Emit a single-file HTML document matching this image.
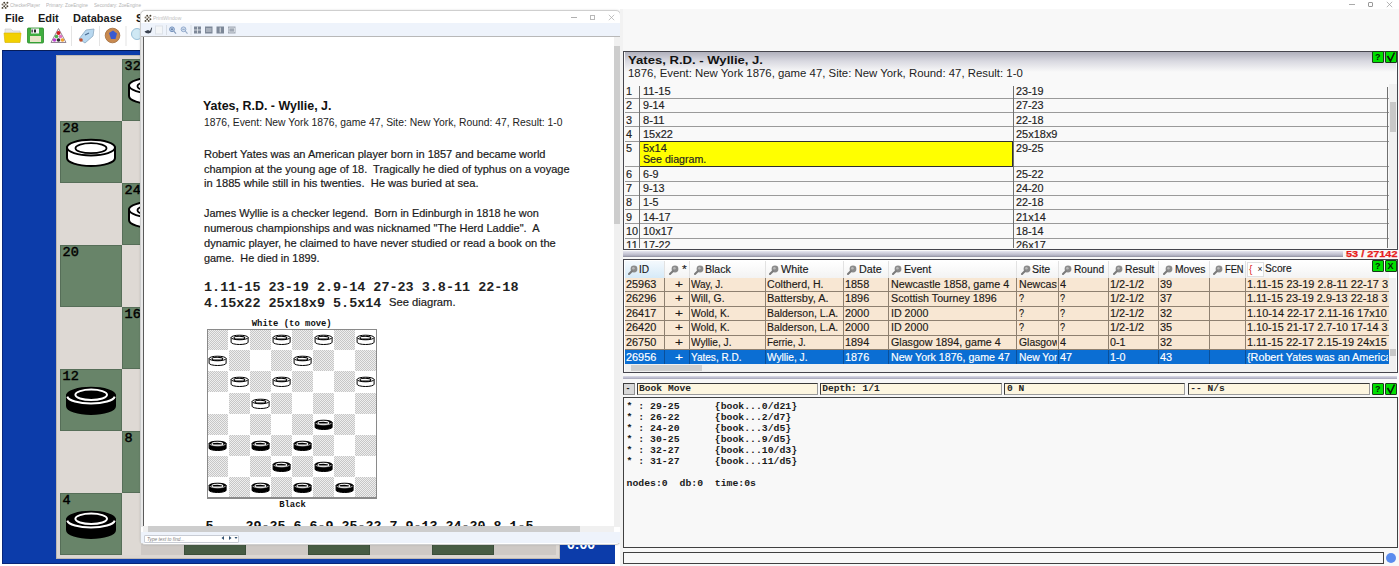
<!DOCTYPE html><html><head><meta charset="utf-8"><style>
*{box-sizing:border-box}
html,body{margin:0;padding:0}
body{width:1399px;height:566px;overflow:hidden;position:relative;background:#f8f8f8;font-family:"Liberation Sans",sans-serif;color:#000}
.a{position:absolute}
svg{display:block}
.nw{white-space:pre}
.mono{font-family:"Liberation Mono",monospace}
.menu{position:absolute;font-weight:bold;font-size:11px;top:11.5px;color:#1a1a1a;line-height:13px}
.sq{position:absolute;width:62px;height:62px}
.lt{background:#ded9d4}
.dk{background:#688469;box-shadow:inset 0 0 0 1px #566e58}
.lbl{position:absolute;left:2.6px;top:1.4px;font-family:"Liberation Mono",monospace;font-weight:normal;font-size:13.5px;line-height:14px;color:#000;-webkit-text-stroke:0.45px #000}
</style></head><body>
<div class="a" style="left:0;top:0;width:620px;height:566px;background:#fff"></div>
<div class="a nw" style="left:10.00px;top:2.12px;font-size:6px;line-height:6px;font-family:'Liberation Sans',sans-serif;color:#b4b4b4;transform-origin:0 0;transform:scaleX(0.7624);">CheckerPlayer</div>
<div class="a nw" style="left:46.00px;top:2.12px;font-size:6px;line-height:6px;font-family:'Liberation Sans',sans-serif;color:#b4b4b4;transform-origin:0 0;transform:scaleX(0.7921);">Primary: ZoeEngine</div>
<div class="a nw" style="left:94.00px;top:2.12px;font-size:6px;line-height:6px;font-family:'Liberation Sans',sans-serif;color:#b4b4b4;transform-origin:0 0;transform:scaleX(0.7700);">Secondary: ZoeEngine</div>
<svg class="a" style="left:0.8px;top:0.6px" width="8" height="8" viewBox="0 0 8 8"><circle cx="3.1999999999999997" cy="1.8" r="0.95" fill="#4a4232"/><circle cx="6.4" cy="1.8" r="0.95" fill="#4a4232"/><circle cx="1.5" cy="3.5" r="0.95" fill="#7a7060"/><circle cx="4.7" cy="3.5" r="0.95" fill="#7a7060"/><circle cx="3.1999999999999997" cy="5.2" r="0.95" fill="#4a4232"/><circle cx="6.4" cy="5.2" r="0.95" fill="#4a4232"/><circle cx="1.5" cy="6.9" r="0.95" fill="#4a4232"/><circle cx="4.7" cy="6.9" r="0.95" fill="#4a4232"/></svg>
<svg class="a" style="left:0;top:24px" width="141" height="24" viewBox="0 0 141 24"><path d="M5,5 L11,5 L13,7 L20,7 L20,18 L5,18 Z" fill="#e8e8e8" stroke="#c8c8c8" stroke-width="0.6"/><path d="M4,9 L21,9 L20,18.5 L5,18.5 Z" fill="#f2d000" stroke="#d8b400" stroke-width="0.6"/><rect x="27.5" y="4" width="16" height="15" rx="1" fill="#3fae3f" stroke="#2a8a2a" stroke-width="0.8"/><rect x="31" y="4.5" width="8" height="5" fill="#f4f4f4"/><rect x="34" y="5.5" width="2" height="3" fill="#222"/><rect x="31.5" y="5.5" width="1.2" height="3" fill="#222"/><rect x="30" y="12" width="11" height="6" fill="#e8e6c8"/><path d="M58.5,4.5 L66,18.5 L51,18.5 Z" fill="#f6f6f6" stroke="#8a7a8a" stroke-width="0.9"/><circle cx="58.5" cy="9" r="2" fill="#d02020"/><circle cx="56.5" cy="12.5" r="1.8" fill="#50b050"/><circle cx="60.5" cy="12.5" r="1.8" fill="#e070c0"/><circle cx="54.5" cy="16" r="1.8" fill="#c040d0"/><circle cx="58.5" cy="16" r="1.8" fill="#303030"/><circle cx="62.5" cy="16" r="1.8" fill="#f0a030"/><rect x="71" y="2" width="1" height="20" fill="#e4e4e4"/><path d="M79,15 L86,6 L94,5 L93,12 L85,19 Z" fill="#b8d8f0" stroke="#8aa8c0" stroke-width="0.8"/><circle cx="81" cy="16" r="1.8" fill="#c05030"/><path d="M85,11 L89,9" stroke="#4a6a90" stroke-width="1.2"/><rect x="99" y="2" width="1" height="20" fill="#e4e4e4"/><circle cx="112.5" cy="11.5" r="7.3" fill="#c88a50" stroke="#a06a38" stroke-width="0.8"/><path d="M109,9 L113,6.5 L117,9.5 L115.5,15 L111,15 Z" fill="#3a5ad0"/><rect x="125.5" y="2" width="1" height="20" fill="#e4e4e4"/><circle cx="137" cy="10" r="5.5" fill="#cfe8f4" stroke="#9ac0d8" stroke-width="1"/></svg>
<div class="menu" style="left:5px">File</div>
<div class="menu" style="left:38px">Edit</div>
<div class="menu" style="left:73px">Database</div>
<div class="menu" style="left:136px">S</div>
<div class="a" style="left:2px;top:50px;width:613px;height:514px;background:#0c3caa;border-top:1.6px solid #061c58;border-left:1px solid #08267a;border-bottom:1px solid #08267a"></div>
<div class="a" style="left:56px;top:55px;width:504px;height:504px;background:#dcd7d2;box-shadow:inset 0 0 0 1px #bdb8b3"></div>
<div class="sq lt" style="left:60px;top:59px"></div>
<div class="sq dk" style="left:122px;top:59px"><div class="lbl">32</div><svg class="a" style="left:0;top:0" width="62" height="62" viewBox="0 0 62 62"><path d="M7,26.6 L7,37 A24,8 0 0 0 55,37 L55,26.6 Z" fill="#fff" stroke="#000" stroke-width="2"/><ellipse cx="31" cy="26.6" rx="24" ry="7.8" fill="#fff" stroke="#000" stroke-width="2"/><ellipse cx="31" cy="27.2" rx="15.5" ry="5" fill="none" stroke="#000" stroke-width="1.8"/></svg></div>
<div class="sq lt" style="left:184px;top:59px"></div>
<div class="sq dk" style="left:246px;top:59px"><div class="lbl">31</div></div>
<div class="sq lt" style="left:308px;top:59px"></div>
<div class="sq dk" style="left:370px;top:59px"><div class="lbl">30</div></div>
<div class="sq lt" style="left:432px;top:59px"></div>
<div class="sq dk" style="left:494px;top:59px"><div class="lbl">29</div></div>
<div class="sq dk" style="left:60px;top:121px"><div class="lbl">28</div><svg class="a" style="left:0;top:0" width="62" height="62" viewBox="0 0 62 62"><path d="M7,26.6 L7,37 A24,8 0 0 0 55,37 L55,26.6 Z" fill="#fff" stroke="#000" stroke-width="2"/><ellipse cx="31" cy="26.6" rx="24" ry="7.8" fill="#fff" stroke="#000" stroke-width="2"/><ellipse cx="31" cy="27.2" rx="15.5" ry="5" fill="none" stroke="#000" stroke-width="1.8"/></svg></div>
<div class="sq lt" style="left:122px;top:121px"></div>
<div class="sq dk" style="left:184px;top:121px"><div class="lbl">27</div></div>
<div class="sq lt" style="left:246px;top:121px"></div>
<div class="sq dk" style="left:308px;top:121px"><div class="lbl">26</div></div>
<div class="sq lt" style="left:370px;top:121px"></div>
<div class="sq dk" style="left:432px;top:121px"><div class="lbl">25</div></div>
<div class="sq lt" style="left:494px;top:121px"></div>
<div class="sq lt" style="left:60px;top:183px"></div>
<div class="sq dk" style="left:122px;top:183px"><div class="lbl">24</div><svg class="a" style="left:0;top:0" width="62" height="62" viewBox="0 0 62 62"><path d="M7,26.6 L7,37 A24,8 0 0 0 55,37 L55,26.6 Z" fill="#fff" stroke="#000" stroke-width="2"/><ellipse cx="31" cy="26.6" rx="24" ry="7.8" fill="#fff" stroke="#000" stroke-width="2"/><ellipse cx="31" cy="27.2" rx="15.5" ry="5" fill="none" stroke="#000" stroke-width="1.8"/></svg></div>
<div class="sq lt" style="left:184px;top:183px"></div>
<div class="sq dk" style="left:246px;top:183px"><div class="lbl">23</div></div>
<div class="sq lt" style="left:308px;top:183px"></div>
<div class="sq dk" style="left:370px;top:183px"><div class="lbl">22</div></div>
<div class="sq lt" style="left:432px;top:183px"></div>
<div class="sq dk" style="left:494px;top:183px"><div class="lbl">21</div></div>
<div class="sq dk" style="left:60px;top:245px"><div class="lbl">20</div></div>
<div class="sq lt" style="left:122px;top:245px"></div>
<div class="sq dk" style="left:184px;top:245px"><div class="lbl">19</div></div>
<div class="sq lt" style="left:246px;top:245px"></div>
<div class="sq dk" style="left:308px;top:245px"><div class="lbl">18</div></div>
<div class="sq lt" style="left:370px;top:245px"></div>
<div class="sq dk" style="left:432px;top:245px"><div class="lbl">17</div></div>
<div class="sq lt" style="left:494px;top:245px"></div>
<div class="sq lt" style="left:60px;top:307px"></div>
<div class="sq dk" style="left:122px;top:307px"><div class="lbl">16</div></div>
<div class="sq lt" style="left:184px;top:307px"></div>
<div class="sq dk" style="left:246px;top:307px"><div class="lbl">15</div></div>
<div class="sq lt" style="left:308px;top:307px"></div>
<div class="sq dk" style="left:370px;top:307px"><div class="lbl">14</div></div>
<div class="sq lt" style="left:432px;top:307px"></div>
<div class="sq dk" style="left:494px;top:307px"><div class="lbl">13</div></div>
<div class="sq dk" style="left:60px;top:369px"><div class="lbl">12</div><svg class="a" style="left:0;top:0" width="62" height="62" viewBox="0 0 62 62"><path d="M7,26.6 L7,37 A24,8 0 0 0 55,37 L55,26.6 Z" fill="#000" stroke="#000" stroke-width="2"/><ellipse cx="31" cy="26.6" rx="24" ry="7.8" fill="#000" stroke="#000" stroke-width="2"/><path d="M7.3,27.6 A23.8,7.6 0 0 0 54.7,27.6" fill="none" stroke="#fff" stroke-width="2"/><ellipse cx="31.2" cy="25.8" rx="15.8" ry="5.2" fill="none" stroke="#fff" stroke-width="2"/></svg></div>
<div class="sq lt" style="left:122px;top:369px"></div>
<div class="sq dk" style="left:184px;top:369px"><div class="lbl">11</div></div>
<div class="sq lt" style="left:246px;top:369px"></div>
<div class="sq dk" style="left:308px;top:369px"><div class="lbl">10</div></div>
<div class="sq lt" style="left:370px;top:369px"></div>
<div class="sq dk" style="left:432px;top:369px"><div class="lbl">9</div></div>
<div class="sq lt" style="left:494px;top:369px"></div>
<div class="sq lt" style="left:60px;top:431px"></div>
<div class="sq dk" style="left:122px;top:431px"><div class="lbl">8</div></div>
<div class="sq lt" style="left:184px;top:431px"></div>
<div class="sq dk" style="left:246px;top:431px"><div class="lbl">7</div></div>
<div class="sq lt" style="left:308px;top:431px"></div>
<div class="sq dk" style="left:370px;top:431px"><div class="lbl">6</div></div>
<div class="sq lt" style="left:432px;top:431px"></div>
<div class="sq dk" style="left:494px;top:431px"><div class="lbl">5</div></div>
<div class="sq dk" style="left:60px;top:493px"><div class="lbl">4</div><svg class="a" style="left:0;top:0" width="62" height="62" viewBox="0 0 62 62"><path d="M7,26.6 L7,37 A24,8 0 0 0 55,37 L55,26.6 Z" fill="#000" stroke="#000" stroke-width="2"/><ellipse cx="31" cy="26.6" rx="24" ry="7.8" fill="#000" stroke="#000" stroke-width="2"/><path d="M7.3,27.6 A23.8,7.6 0 0 0 54.7,27.6" fill="none" stroke="#fff" stroke-width="2"/><ellipse cx="31.2" cy="25.8" rx="15.8" ry="5.2" fill="none" stroke="#fff" stroke-width="2"/></svg></div>
<div class="sq lt" style="left:122px;top:493px"></div>
<div class="sq dk" style="left:184px;top:493px"><div class="lbl">3</div></div>
<div class="sq lt" style="left:246px;top:493px"></div>
<div class="sq dk" style="left:308px;top:493px"><div class="lbl">2</div></div>
<div class="sq lt" style="left:370px;top:493px"></div>
<div class="sq dk" style="left:432px;top:493px"><div class="lbl">1</div></div>
<div class="sq lt" style="left:494px;top:493px"></div>
<div class="a nw" style="left:567px;top:536px;font-size:14px;font-weight:bold;color:#fff">0:00</div>
<div class="a" style="left:141px;top:544px;width:415px;height:11px;background:rgba(0,0,0,0.07)"></div>
<div class="a" style="left:184px;top:544px;width:62px;height:11px;background:rgba(20,30,10,0.32)"></div>
<div class="a" style="left:308px;top:544px;width:62px;height:11px;background:rgba(20,30,10,0.32)"></div>
<div class="a" style="left:432px;top:544px;width:62px;height:11px;background:rgba(20,30,10,0.32)"></div>
<div class="a" style="left:140px;top:10px;width:481px;height:534.5px;background:#fff;border:1px solid #cfcfcf;border-radius:5px;box-shadow:0 0 2px rgba(0,0,0,.15)"></div>
<svg class="a" style="left:143.5px;top:14px" width="8" height="8" viewBox="0 0 8 8"><circle cx="3.1999999999999997" cy="1.8" r="0.95" fill="#4a4232"/><circle cx="6.4" cy="1.8" r="0.95" fill="#4a4232"/><circle cx="1.5" cy="3.5" r="0.95" fill="#7a7060"/><circle cx="4.7" cy="3.5" r="0.95" fill="#7a7060"/><circle cx="3.1999999999999997" cy="5.2" r="0.95" fill="#4a4232"/><circle cx="6.4" cy="5.2" r="0.95" fill="#4a4232"/><circle cx="1.5" cy="6.9" r="0.95" fill="#4a4232"/><circle cx="4.7" cy="6.9" r="0.95" fill="#4a4232"/></svg>
<div class="a nw" id="pwt" style="left:153px;top:14.5px;font-size:7px;line-height:8px;color:#c0c0c0;transform-origin:0 0;transform:scale(0.72,0.8)">PrintWindow</div>
<div class="a" style="left:571px;top:17px;width:6px;height:1px;background:#b0b0b0"></div>
<div class="a" style="left:589.5px;top:14.5px;width:5px;height:5px;border:1px solid #b8b8b8"></div>
<svg class="a" style="left:608px;top:14px" width="7" height="7" viewBox="0 0 7 7"><path d="M0.8,0.8 L6.2,6.2 M6.2,0.8 L0.8,6.2" stroke="#a8a8a8" stroke-width="0.7"/></svg>
<div class="a" style="left:141px;top:23px;width:479px;height:14px;background:#eef3fb;border-bottom:1px solid #b8b8b8"></div>
<svg class="a" style="left:141px;top:23px" width="110" height="14" viewBox="0 0 110 14"><path d="M3.5,8.5 L7,7 L9,8 L10.5,4.5 L11.2,4.8 L10,9.5 L7.5,10.5 L5,10 Z" fill="#3a4250"/><rect x="14.5" y="3" width="7" height="8" fill="#f4f6f8" stroke="#dde2e8" stroke-width="1"/><rect x="25" y="2" width="1" height="10" fill="#d8dde4"/><circle cx="31" cy="6.3" r="2.4" fill="#c4d4ea" stroke="#6a8ab8" stroke-width="0.9"/><path d="M29.8,6.3 H32.2 M31,5.1 V7.5" stroke="#4a6a98" stroke-width="0.7"/><path d="M32.8,8.2 L35,10.6" stroke="#8098b8" stroke-width="1.2"/><circle cx="42.5" cy="6.3" r="2.4" fill="#d4e0f0" stroke="#8aa4c8" stroke-width="0.9"/><path d="M41.3,6.3 H43.7" stroke="#6a88b0" stroke-width="0.7"/><path d="M44.3,8.2 L46.5,10.6" stroke="#98acc8" stroke-width="1.2"/><rect x="49.5" y="2" width="1" height="10" fill="#d8dde4"/><rect x="53" y="3.5" width="7" height="7" fill="#7d8898"/><path d="M56.5,3.5 V10.5 M53,7 H60" stroke="#e8ecf0" stroke-width="0.8"/><rect x="64" y="3.5" width="7.5" height="7" fill="#7d8898"/><path d="M65,6 H70.5 M65,8 H70.5" stroke="#e8ecf0" stroke-width="0.8"/><rect x="75.5" y="3.5" width="7.5" height="7" fill="#7d8898"/><path d="M79.2,4.5 V9.5" stroke="#e8ecf0" stroke-width="1"/><rect x="87" y="3.5" width="7.5" height="7" fill="#a0a8b4"/><path d="M88,5 H93.5 V9 H88 Z" fill="none" stroke="#e8ecf0" stroke-width="0.7"/></svg>
<div class="a nw" style="left:203.40px;top:99.00px;font-size:13px;line-height:13px;font-family:'Liberation Sans',sans-serif;color:#111;font-weight:bold;transform-origin:0 0;transform:scaleX(0.9579);">Yates, R.D. - Wyllie, J.</div>
<div class="a nw" style="left:204.00px;top:116.51px;font-size:10.5px;line-height:10.5px;font-family:'Liberation Sans',sans-serif;color:#222;transform-origin:0 0;transform:scaleX(0.9843);">1876, Event: New York 1876, game 47, Site: New York, Round: 47, Result: 1-0</div>
<div class="a nw" style="left:204.00px;top:148.79px;font-size:11px;line-height:11px;font-family:'Liberation Sans',sans-serif;color:#1a1a1a;transform-origin:0 0;transform:scaleX(1.0039);-webkit-text-stroke:0.2px #1a1a1a;">Robert Yates was an American player born in 1857 and became world</div>
<div class="a nw" style="left:204.00px;top:163.59px;font-size:11px;line-height:11px;font-family:'Liberation Sans',sans-serif;color:#1a1a1a;transform-origin:0 0;transform:scaleX(0.9995);-webkit-text-stroke:0.2px #1a1a1a;">champion at the young age of 18.  Tragically he died of typhus on a voyage</div>
<div class="a nw" style="left:204.00px;top:177.99px;font-size:11px;line-height:11px;font-family:'Liberation Sans',sans-serif;color:#1a1a1a;transform-origin:0 0;transform:scaleX(1.0134);-webkit-text-stroke:0.2px #1a1a1a;">in 1885 while still in his twenties.  He was buried at sea.</div>
<div class="a nw" style="left:204.00px;top:207.99px;font-size:11px;line-height:11px;font-family:'Liberation Sans',sans-serif;color:#1a1a1a;transform-origin:0 0;transform:scaleX(0.9922);-webkit-text-stroke:0.2px #1a1a1a;">James Wyllie is a checker legend.  Born in Edinburgh in 1818 he won</div>
<div class="a nw" style="left:204.00px;top:222.79px;font-size:11px;line-height:11px;font-family:'Liberation Sans',sans-serif;color:#1a1a1a;transform-origin:0 0;transform:scaleX(1.0035);-webkit-text-stroke:0.2px #1a1a1a;">numerous championships and was nicknamed &quot;The Herd Laddie&quot;.  A</div>
<div class="a nw" style="left:204.00px;top:237.69px;font-size:11px;line-height:11px;font-family:'Liberation Sans',sans-serif;color:#1a1a1a;transform-origin:0 0;transform:scaleX(1.0093);-webkit-text-stroke:0.2px #1a1a1a;">dynamic player, he claimed to have never studied or read a book on the</div>
<div class="a nw" style="left:204.00px;top:252.59px;font-size:11px;line-height:11px;font-family:'Liberation Sans',sans-serif;color:#1a1a1a;transform-origin:0 0;transform:scaleX(0.9897);-webkit-text-stroke:0.2px #1a1a1a;">game.  He died in 1899.</div>
<div class="a nw" style="left:204.00px;top:280.99px;font-size:13.45px;line-height:13.45px;font-family:'Liberation Mono',monospace;color:#222;font-weight:bold;">1.11-15 23-19 2.9-14 27-23 3.8-11 22-18</div>
<div class="a nw" style="left:204.00px;top:296.89px;font-size:13.45px;line-height:13.45px;font-family:'Liberation Mono',monospace;color:#222;font-weight:bold;">4.15x22 25x18x9 5.5x14</div>
<div class="a nw" style="left:388.50px;top:297.49px;font-size:11px;line-height:11px;font-family:'Liberation Sans',sans-serif;color:#1a1a1a;transform-origin:0 0;transform:scaleX(1.0164);-webkit-text-stroke:0.2px #1a1a1a;">See diagram.</div>
<div class="a nw" style="left:251.80px;top:320.18px;font-size:8.9px;line-height:8.9px;font-family:'Liberation Mono',monospace;color:#111;font-weight:bold;">White (to move)</div>
<div class="a nw" style="left:279.20px;top:500.78px;font-size:8.9px;line-height:8.9px;font-family:'Liberation Mono',monospace;color:#111;font-weight:bold;">Black</div>
<div class="a" style="left:206.80px;top:328.60px;width:170.00px;height:170.00px;border:1px solid #8a8a8a;background:#fff"></div>
<div class="a" style="left:207.40px;top:329.20px;width:21.10px;height:21.10px;background:repeating-conic-gradient(#c6c6c6 0 25%,#eeeeee 0 50%) 0 0/2px 2px"></div>
<div class="a" style="left:228.50px;top:329.20px;width:21.10px;height:21.10px"><svg class="a" style="left:0;top:0" width="21" height="21" viewBox="0 0 21 21"><path d="M2.1,8.5 L2.1,13.2 A8.5,2.3 0 0 0 19.1,13.2 L19.1,8.5 Z" fill="#fff" stroke="#000" stroke-width="1"/><ellipse cx="10.6" cy="8.5" rx="8.5" ry="2.3" fill="#fff" stroke="#000" stroke-width="1"/><ellipse cx="10.4" cy="8.7" rx="5.4" ry="1.45" fill="none" stroke="#000" stroke-width="1.1"/></svg></div>
<div class="a" style="left:249.60px;top:329.20px;width:21.10px;height:21.10px;background:repeating-conic-gradient(#c6c6c6 0 25%,#eeeeee 0 50%) 0 0/2px 2px"></div>
<div class="a" style="left:270.70px;top:329.20px;width:21.10px;height:21.10px"><svg class="a" style="left:0;top:0" width="21" height="21" viewBox="0 0 21 21"><path d="M2.1,8.5 L2.1,13.2 A8.5,2.3 0 0 0 19.1,13.2 L19.1,8.5 Z" fill="#fff" stroke="#000" stroke-width="1"/><ellipse cx="10.6" cy="8.5" rx="8.5" ry="2.3" fill="#fff" stroke="#000" stroke-width="1"/><ellipse cx="10.4" cy="8.7" rx="5.4" ry="1.45" fill="none" stroke="#000" stroke-width="1.1"/></svg></div>
<div class="a" style="left:291.80px;top:329.20px;width:21.10px;height:21.10px;background:repeating-conic-gradient(#c6c6c6 0 25%,#eeeeee 0 50%) 0 0/2px 2px"></div>
<div class="a" style="left:312.90px;top:329.20px;width:21.10px;height:21.10px"><svg class="a" style="left:0;top:0" width="21" height="21" viewBox="0 0 21 21"><path d="M2.1,8.5 L2.1,13.2 A8.5,2.3 0 0 0 19.1,13.2 L19.1,8.5 Z" fill="#fff" stroke="#000" stroke-width="1"/><ellipse cx="10.6" cy="8.5" rx="8.5" ry="2.3" fill="#fff" stroke="#000" stroke-width="1"/><ellipse cx="10.4" cy="8.7" rx="5.4" ry="1.45" fill="none" stroke="#000" stroke-width="1.1"/></svg></div>
<div class="a" style="left:334.00px;top:329.20px;width:21.10px;height:21.10px;background:repeating-conic-gradient(#c6c6c6 0 25%,#eeeeee 0 50%) 0 0/2px 2px"></div>
<div class="a" style="left:355.10px;top:329.20px;width:21.10px;height:21.10px"><svg class="a" style="left:0;top:0" width="21" height="21" viewBox="0 0 21 21"><path d="M2.1,8.5 L2.1,13.2 A8.5,2.3 0 0 0 19.1,13.2 L19.1,8.5 Z" fill="#fff" stroke="#000" stroke-width="1"/><ellipse cx="10.6" cy="8.5" rx="8.5" ry="2.3" fill="#fff" stroke="#000" stroke-width="1"/><ellipse cx="10.4" cy="8.7" rx="5.4" ry="1.45" fill="none" stroke="#000" stroke-width="1.1"/></svg></div>
<div class="a" style="left:207.40px;top:350.30px;width:21.10px;height:21.10px"><svg class="a" style="left:0;top:0" width="21" height="21" viewBox="0 0 21 21"><path d="M2.1,8.5 L2.1,13.2 A8.5,2.3 0 0 0 19.1,13.2 L19.1,8.5 Z" fill="#fff" stroke="#000" stroke-width="1"/><ellipse cx="10.6" cy="8.5" rx="8.5" ry="2.3" fill="#fff" stroke="#000" stroke-width="1"/><ellipse cx="10.4" cy="8.7" rx="5.4" ry="1.45" fill="none" stroke="#000" stroke-width="1.1"/></svg></div>
<div class="a" style="left:228.50px;top:350.30px;width:21.10px;height:21.10px;background:repeating-conic-gradient(#c6c6c6 0 25%,#eeeeee 0 50%) 0 0/2px 2px"></div>
<div class="a" style="left:270.70px;top:350.30px;width:21.10px;height:21.10px;background:repeating-conic-gradient(#c6c6c6 0 25%,#eeeeee 0 50%) 0 0/2px 2px"></div>
<div class="a" style="left:291.80px;top:350.30px;width:21.10px;height:21.10px"><svg class="a" style="left:0;top:0" width="21" height="21" viewBox="0 0 21 21"><path d="M2.1,8.5 L2.1,13.2 A8.5,2.3 0 0 0 19.1,13.2 L19.1,8.5 Z" fill="#fff" stroke="#000" stroke-width="1"/><ellipse cx="10.6" cy="8.5" rx="8.5" ry="2.3" fill="#fff" stroke="#000" stroke-width="1"/><ellipse cx="10.4" cy="8.7" rx="5.4" ry="1.45" fill="none" stroke="#000" stroke-width="1.1"/></svg></div>
<div class="a" style="left:312.90px;top:350.30px;width:21.10px;height:21.10px;background:repeating-conic-gradient(#c6c6c6 0 25%,#eeeeee 0 50%) 0 0/2px 2px"></div>
<div class="a" style="left:355.10px;top:350.30px;width:21.10px;height:21.10px;background:repeating-conic-gradient(#c6c6c6 0 25%,#eeeeee 0 50%) 0 0/2px 2px"></div>
<div class="a" style="left:207.40px;top:371.40px;width:21.10px;height:21.10px;background:repeating-conic-gradient(#c6c6c6 0 25%,#eeeeee 0 50%) 0 0/2px 2px"></div>
<div class="a" style="left:228.50px;top:371.40px;width:21.10px;height:21.10px"><svg class="a" style="left:0;top:0" width="21" height="21" viewBox="0 0 21 21"><path d="M2.1,8.5 L2.1,13.2 A8.5,2.3 0 0 0 19.1,13.2 L19.1,8.5 Z" fill="#fff" stroke="#000" stroke-width="1"/><ellipse cx="10.6" cy="8.5" rx="8.5" ry="2.3" fill="#fff" stroke="#000" stroke-width="1"/><ellipse cx="10.4" cy="8.7" rx="5.4" ry="1.45" fill="none" stroke="#000" stroke-width="1.1"/></svg></div>
<div class="a" style="left:249.60px;top:371.40px;width:21.10px;height:21.10px;background:repeating-conic-gradient(#c6c6c6 0 25%,#eeeeee 0 50%) 0 0/2px 2px"></div>
<div class="a" style="left:270.70px;top:371.40px;width:21.10px;height:21.10px"><svg class="a" style="left:0;top:0" width="21" height="21" viewBox="0 0 21 21"><path d="M2.1,8.5 L2.1,13.2 A8.5,2.3 0 0 0 19.1,13.2 L19.1,8.5 Z" fill="#fff" stroke="#000" stroke-width="1"/><ellipse cx="10.6" cy="8.5" rx="8.5" ry="2.3" fill="#fff" stroke="#000" stroke-width="1"/><ellipse cx="10.4" cy="8.7" rx="5.4" ry="1.45" fill="none" stroke="#000" stroke-width="1.1"/></svg></div>
<div class="a" style="left:291.80px;top:371.40px;width:21.10px;height:21.10px;background:repeating-conic-gradient(#c6c6c6 0 25%,#eeeeee 0 50%) 0 0/2px 2px"></div>
<div class="a" style="left:334.00px;top:371.40px;width:21.10px;height:21.10px;background:repeating-conic-gradient(#c6c6c6 0 25%,#eeeeee 0 50%) 0 0/2px 2px"></div>
<div class="a" style="left:355.10px;top:371.40px;width:21.10px;height:21.10px"><svg class="a" style="left:0;top:0" width="21" height="21" viewBox="0 0 21 21"><path d="M2.1,8.5 L2.1,13.2 A8.5,2.3 0 0 0 19.1,13.2 L19.1,8.5 Z" fill="#fff" stroke="#000" stroke-width="1"/><ellipse cx="10.6" cy="8.5" rx="8.5" ry="2.3" fill="#fff" stroke="#000" stroke-width="1"/><ellipse cx="10.4" cy="8.7" rx="5.4" ry="1.45" fill="none" stroke="#000" stroke-width="1.1"/></svg></div>
<div class="a" style="left:228.50px;top:392.50px;width:21.10px;height:21.10px;background:repeating-conic-gradient(#c6c6c6 0 25%,#eeeeee 0 50%) 0 0/2px 2px"></div>
<div class="a" style="left:249.60px;top:392.50px;width:21.10px;height:21.10px"><svg class="a" style="left:0;top:0" width="21" height="21" viewBox="0 0 21 21"><path d="M2.1,8.5 L2.1,13.2 A8.5,2.3 0 0 0 19.1,13.2 L19.1,8.5 Z" fill="#fff" stroke="#000" stroke-width="1"/><ellipse cx="10.6" cy="8.5" rx="8.5" ry="2.3" fill="#fff" stroke="#000" stroke-width="1"/><ellipse cx="10.4" cy="8.7" rx="5.4" ry="1.45" fill="none" stroke="#000" stroke-width="1.1"/></svg></div>
<div class="a" style="left:270.70px;top:392.50px;width:21.10px;height:21.10px;background:repeating-conic-gradient(#c6c6c6 0 25%,#eeeeee 0 50%) 0 0/2px 2px"></div>
<div class="a" style="left:312.90px;top:392.50px;width:21.10px;height:21.10px;background:repeating-conic-gradient(#c6c6c6 0 25%,#eeeeee 0 50%) 0 0/2px 2px"></div>
<div class="a" style="left:355.10px;top:392.50px;width:21.10px;height:21.10px;background:repeating-conic-gradient(#c6c6c6 0 25%,#eeeeee 0 50%) 0 0/2px 2px"></div>
<div class="a" style="left:207.40px;top:413.60px;width:21.10px;height:21.10px;background:repeating-conic-gradient(#c6c6c6 0 25%,#eeeeee 0 50%) 0 0/2px 2px"></div>
<div class="a" style="left:249.60px;top:413.60px;width:21.10px;height:21.10px;background:repeating-conic-gradient(#c6c6c6 0 25%,#eeeeee 0 50%) 0 0/2px 2px"></div>
<div class="a" style="left:291.80px;top:413.60px;width:21.10px;height:21.10px;background:repeating-conic-gradient(#c6c6c6 0 25%,#eeeeee 0 50%) 0 0/2px 2px"></div>
<div class="a" style="left:312.90px;top:413.60px;width:21.10px;height:21.10px"><svg class="a" style="left:0;top:0" width="21" height="21" viewBox="0 0 21 21"><path d="M2.1,8.5 L2.1,13.2 A8.5,2.3 0 0 0 19.1,13.2 L19.1,8.5 Z" fill="#000" stroke="#000" stroke-width="1"/><ellipse cx="10.6" cy="8.5" rx="8.5" ry="2.3" fill="#000" stroke="#000" stroke-width="1"/><path d="M2.6,9.2 A8.2,2.2 0 0 0 18.6,9.2" fill="none" stroke="#d8d8d8" stroke-width="0.8"/><ellipse cx="10.4" cy="8.7" rx="5.4" ry="1.45" fill="none" stroke="#fff" stroke-width="1.1"/></svg></div>
<div class="a" style="left:334.00px;top:413.60px;width:21.10px;height:21.10px;background:repeating-conic-gradient(#c6c6c6 0 25%,#eeeeee 0 50%) 0 0/2px 2px"></div>
<div class="a" style="left:207.40px;top:434.70px;width:21.10px;height:21.10px"><svg class="a" style="left:0;top:0" width="21" height="21" viewBox="0 0 21 21"><path d="M2.1,8.5 L2.1,13.2 A8.5,2.3 0 0 0 19.1,13.2 L19.1,8.5 Z" fill="#000" stroke="#000" stroke-width="1"/><ellipse cx="10.6" cy="8.5" rx="8.5" ry="2.3" fill="#000" stroke="#000" stroke-width="1"/><path d="M2.6,9.2 A8.2,2.2 0 0 0 18.6,9.2" fill="none" stroke="#d8d8d8" stroke-width="0.8"/><ellipse cx="10.4" cy="8.7" rx="5.4" ry="1.45" fill="none" stroke="#fff" stroke-width="1.1"/></svg></div>
<div class="a" style="left:228.50px;top:434.70px;width:21.10px;height:21.10px;background:repeating-conic-gradient(#c6c6c6 0 25%,#eeeeee 0 50%) 0 0/2px 2px"></div>
<div class="a" style="left:249.60px;top:434.70px;width:21.10px;height:21.10px"><svg class="a" style="left:0;top:0" width="21" height="21" viewBox="0 0 21 21"><path d="M2.1,8.5 L2.1,13.2 A8.5,2.3 0 0 0 19.1,13.2 L19.1,8.5 Z" fill="#000" stroke="#000" stroke-width="1"/><ellipse cx="10.6" cy="8.5" rx="8.5" ry="2.3" fill="#000" stroke="#000" stroke-width="1"/><path d="M2.6,9.2 A8.2,2.2 0 0 0 18.6,9.2" fill="none" stroke="#d8d8d8" stroke-width="0.8"/><ellipse cx="10.4" cy="8.7" rx="5.4" ry="1.45" fill="none" stroke="#fff" stroke-width="1.1"/></svg></div>
<div class="a" style="left:270.70px;top:434.70px;width:21.10px;height:21.10px;background:repeating-conic-gradient(#c6c6c6 0 25%,#eeeeee 0 50%) 0 0/2px 2px"></div>
<div class="a" style="left:291.80px;top:434.70px;width:21.10px;height:21.10px"><svg class="a" style="left:0;top:0" width="21" height="21" viewBox="0 0 21 21"><path d="M2.1,8.5 L2.1,13.2 A8.5,2.3 0 0 0 19.1,13.2 L19.1,8.5 Z" fill="#000" stroke="#000" stroke-width="1"/><ellipse cx="10.6" cy="8.5" rx="8.5" ry="2.3" fill="#000" stroke="#000" stroke-width="1"/><path d="M2.6,9.2 A8.2,2.2 0 0 0 18.6,9.2" fill="none" stroke="#d8d8d8" stroke-width="0.8"/><ellipse cx="10.4" cy="8.7" rx="5.4" ry="1.45" fill="none" stroke="#fff" stroke-width="1.1"/></svg></div>
<div class="a" style="left:312.90px;top:434.70px;width:21.10px;height:21.10px;background:repeating-conic-gradient(#c6c6c6 0 25%,#eeeeee 0 50%) 0 0/2px 2px"></div>
<div class="a" style="left:355.10px;top:434.70px;width:21.10px;height:21.10px;background:repeating-conic-gradient(#c6c6c6 0 25%,#eeeeee 0 50%) 0 0/2px 2px"></div>
<div class="a" style="left:207.40px;top:455.80px;width:21.10px;height:21.10px;background:repeating-conic-gradient(#c6c6c6 0 25%,#eeeeee 0 50%) 0 0/2px 2px"></div>
<div class="a" style="left:249.60px;top:455.80px;width:21.10px;height:21.10px;background:repeating-conic-gradient(#c6c6c6 0 25%,#eeeeee 0 50%) 0 0/2px 2px"></div>
<div class="a" style="left:270.70px;top:455.80px;width:21.10px;height:21.10px"><svg class="a" style="left:0;top:0" width="21" height="21" viewBox="0 0 21 21"><path d="M2.1,8.5 L2.1,13.2 A8.5,2.3 0 0 0 19.1,13.2 L19.1,8.5 Z" fill="#000" stroke="#000" stroke-width="1"/><ellipse cx="10.6" cy="8.5" rx="8.5" ry="2.3" fill="#000" stroke="#000" stroke-width="1"/><path d="M2.6,9.2 A8.2,2.2 0 0 0 18.6,9.2" fill="none" stroke="#d8d8d8" stroke-width="0.8"/><ellipse cx="10.4" cy="8.7" rx="5.4" ry="1.45" fill="none" stroke="#fff" stroke-width="1.1"/></svg></div>
<div class="a" style="left:291.80px;top:455.80px;width:21.10px;height:21.10px;background:repeating-conic-gradient(#c6c6c6 0 25%,#eeeeee 0 50%) 0 0/2px 2px"></div>
<div class="a" style="left:312.90px;top:455.80px;width:21.10px;height:21.10px"><svg class="a" style="left:0;top:0" width="21" height="21" viewBox="0 0 21 21"><path d="M2.1,8.5 L2.1,13.2 A8.5,2.3 0 0 0 19.1,13.2 L19.1,8.5 Z" fill="#000" stroke="#000" stroke-width="1"/><ellipse cx="10.6" cy="8.5" rx="8.5" ry="2.3" fill="#000" stroke="#000" stroke-width="1"/><path d="M2.6,9.2 A8.2,2.2 0 0 0 18.6,9.2" fill="none" stroke="#d8d8d8" stroke-width="0.8"/><ellipse cx="10.4" cy="8.7" rx="5.4" ry="1.45" fill="none" stroke="#fff" stroke-width="1.1"/></svg></div>
<div class="a" style="left:334.00px;top:455.80px;width:21.10px;height:21.10px;background:repeating-conic-gradient(#c6c6c6 0 25%,#eeeeee 0 50%) 0 0/2px 2px"></div>
<div class="a" style="left:207.40px;top:476.90px;width:21.10px;height:21.10px"><svg class="a" style="left:0;top:0" width="21" height="21" viewBox="0 0 21 21"><path d="M2.1,8.5 L2.1,13.2 A8.5,2.3 0 0 0 19.1,13.2 L19.1,8.5 Z" fill="#000" stroke="#000" stroke-width="1"/><ellipse cx="10.6" cy="8.5" rx="8.5" ry="2.3" fill="#000" stroke="#000" stroke-width="1"/><path d="M2.6,9.2 A8.2,2.2 0 0 0 18.6,9.2" fill="none" stroke="#d8d8d8" stroke-width="0.8"/><ellipse cx="10.4" cy="8.7" rx="5.4" ry="1.45" fill="none" stroke="#fff" stroke-width="1.1"/></svg></div>
<div class="a" style="left:228.50px;top:476.90px;width:21.10px;height:21.10px;background:repeating-conic-gradient(#c6c6c6 0 25%,#eeeeee 0 50%) 0 0/2px 2px"></div>
<div class="a" style="left:249.60px;top:476.90px;width:21.10px;height:21.10px"><svg class="a" style="left:0;top:0" width="21" height="21" viewBox="0 0 21 21"><path d="M2.1,8.5 L2.1,13.2 A8.5,2.3 0 0 0 19.1,13.2 L19.1,8.5 Z" fill="#000" stroke="#000" stroke-width="1"/><ellipse cx="10.6" cy="8.5" rx="8.5" ry="2.3" fill="#000" stroke="#000" stroke-width="1"/><path d="M2.6,9.2 A8.2,2.2 0 0 0 18.6,9.2" fill="none" stroke="#d8d8d8" stroke-width="0.8"/><ellipse cx="10.4" cy="8.7" rx="5.4" ry="1.45" fill="none" stroke="#fff" stroke-width="1.1"/></svg></div>
<div class="a" style="left:270.70px;top:476.90px;width:21.10px;height:21.10px;background:repeating-conic-gradient(#c6c6c6 0 25%,#eeeeee 0 50%) 0 0/2px 2px"></div>
<div class="a" style="left:291.80px;top:476.90px;width:21.10px;height:21.10px"><svg class="a" style="left:0;top:0" width="21" height="21" viewBox="0 0 21 21"><path d="M2.1,8.5 L2.1,13.2 A8.5,2.3 0 0 0 19.1,13.2 L19.1,8.5 Z" fill="#000" stroke="#000" stroke-width="1"/><ellipse cx="10.6" cy="8.5" rx="8.5" ry="2.3" fill="#000" stroke="#000" stroke-width="1"/><path d="M2.6,9.2 A8.2,2.2 0 0 0 18.6,9.2" fill="none" stroke="#d8d8d8" stroke-width="0.8"/><ellipse cx="10.4" cy="8.7" rx="5.4" ry="1.45" fill="none" stroke="#fff" stroke-width="1.1"/></svg></div>
<div class="a" style="left:312.90px;top:476.90px;width:21.10px;height:21.10px;background:repeating-conic-gradient(#c6c6c6 0 25%,#eeeeee 0 50%) 0 0/2px 2px"></div>
<div class="a" style="left:334.00px;top:476.90px;width:21.10px;height:21.10px"><svg class="a" style="left:0;top:0" width="21" height="21" viewBox="0 0 21 21"><path d="M2.1,8.5 L2.1,13.2 A8.5,2.3 0 0 0 19.1,13.2 L19.1,8.5 Z" fill="#000" stroke="#000" stroke-width="1"/><ellipse cx="10.6" cy="8.5" rx="8.5" ry="2.3" fill="#000" stroke="#000" stroke-width="1"/><path d="M2.6,9.2 A8.2,2.2 0 0 0 18.6,9.2" fill="none" stroke="#d8d8d8" stroke-width="0.8"/><ellipse cx="10.4" cy="8.7" rx="5.4" ry="1.45" fill="none" stroke="#fff" stroke-width="1.1"/></svg></div>
<div class="a" style="left:355.10px;top:476.90px;width:21.10px;height:21.10px;background:repeating-conic-gradient(#c6c6c6 0 25%,#eeeeee 0 50%) 0 0/2px 2px"></div>
<div class="a" style="left:206.90px;top:328.70px;width:169.80px;height:169.80px;border:1px solid #8a8a8a"></div>
<div class="a nw" style="left:205.50px;top:519.78px;font-size:13.33px;line-height:13.33px;font-family:'Liberation Mono',monospace;color:#111;font-weight:bold;">5.   29-25 6.6-9 25-22 7.9-13 24-20 8.1-5</div>
<div class="a" style="left:141px;top:37px;width:2px;height:490px;background:#e8e8e8"></div>
<div class="a" style="left:143px;top:37px;width:1px;height:490px;background:#5a5a5a"></div>
<div class="a" style="left:614px;top:37px;width:6px;height:490px;background:#f0f0f0"></div>
<div class="a" style="left:614px;top:46px;width:6px;height:178px;background:#cdcdcd"></div>
<div class="a" style="left:143px;top:526px;width:471px;height:6px;background:#f0f0f0"></div>
<div class="a" style="left:148px;top:526.3px;width:432px;height:6.2px;background:#cdcdcd"></div>
<div class="a" style="left:141px;top:532px;width:479px;height:11px;background:#eef3fb"></div>
<div class="a" style="left:144px;top:534.5px;width:95px;height:8.5px;background:#fff;border:1px solid #c8ccd4;border-radius:1px"></div>
<div class="a nw" style="left:146.5px;top:535.6px;font-size:7px;line-height:7px;color:#808080;font-style:italic;transform-origin:0 0;transform:scale(0.68,0.88)">Type text to find...</div>
<svg class="a" style="left:220px;top:534px" width="18" height="8" viewBox="0 0 18 8"><path d="M4,2 L1.5,4 L4,6 Z M9,2 L11.5,4 L9,6 Z M14.5,3 L17.5,3 L16,5 Z" fill="#305070"/></svg>
<div class="a" style="left:620px;top:0;width:779px;height:566px;background:#f8f8f8"></div>
<div class="a" style="left:620px;top:0;width:779px;height:9px;background:#fff"></div>
<div class="a" style="left:1348.5px;top:4px;width:6px;height:1px;background:#aaa"></div>
<div class="a" style="left:1368px;top:2px;width:4.5px;height:4.5px;border:1px solid #999;border-radius:1px"></div>
<svg class="a" style="left:1386px;top:1px" width="7" height="7" viewBox="0 0 7 7"><path d="M0.8,0.8 L6.2,6.2 M6.2,0.8 L0.8,6.2" stroke="#999" stroke-width="0.7"/></svg>
<div class="a" style="left:620px;top:9px;width:3px;height:557px;background:#f2f2f2"></div>
<div class="a" style="left:623px;top:50.5px;width:774.5px;height:199px;border:1.5px solid #45454d;background:#f9f9f9"></div>
<div class="a" style="left:624.5px;top:52px;width:771.5px;height:20px;background:linear-gradient(#b0b0bc,#d8d8e0 45%,#f9f9f9)"></div>
<div class="a nw" style="left:628.20px;top:54.67px;font-size:11.5px;line-height:11.5px;font-family:'Liberation Sans',sans-serif;color:#111;font-weight:bold;transform-origin:0 0;transform:scaleX(1.1376);">Yates, R.D. - Wyllie, J.</div>
<div class="a nw" style="left:628.20px;top:67.71px;font-size:10.5px;line-height:10.5px;font-family:'Liberation Sans',sans-serif;color:#222;transform-origin:0 0;transform:scaleX(1.0839);">1876, Event: New York 1876, game 47, Site: New York, Round: 47, Result: 1-0</div>
<div class="a" style="left:1372px;top:51px;width:12px;height:12px;background:#00e000;border:1px solid #1a3a1a;border-radius:1px"></div><div class="a nw" style="left:1375.00px;top:53.18px;font-size:9px;line-height:9px;font-family:'Liberation Sans',sans-serif;color:#0a1a0a;font-weight:bold;">?</div>
<div class="a" style="left:1385px;top:51px;width:12px;height:12px;background:#00e000;border:1px solid #1a3a1a;border-radius:1px"></div>
<svg class="a" style="left:1385px;top:51px" width="12" height="12" viewBox="0 0 12 12"><path d="M2.5,5 L5.5,10 L9.5,1.5" fill="none" stroke="#0a1a0a" stroke-width="1.6"/></svg>
<div class="a" style="left:624.5px;top:84px;width:764px;height:164px;overflow:hidden">
<div class="a" style="left:0;top:13.80px;width:764px;height:1px;background:#9a9a9a"></div>
<div class="a" style="left:0;top:28.05px;width:764px;height:1px;background:#9a9a9a"></div>
<div class="a" style="left:0;top:42.30px;width:764px;height:1px;background:#9a9a9a"></div>
<div class="a" style="left:0;top:56.55px;width:764px;height:1px;background:#9a9a9a"></div>
<div class="a" style="left:0;top:82.20px;width:764px;height:1px;background:#9a9a9a"></div>
<div class="a" style="left:0;top:96.50px;width:764px;height:1px;background:#9a9a9a"></div>
<div class="a" style="left:0;top:110.80px;width:764px;height:1px;background:#9a9a9a"></div>
<div class="a" style="left:0;top:125.10px;width:764px;height:1px;background:#9a9a9a"></div>
<div class="a" style="left:0;top:139.40px;width:764px;height:1px;background:#9a9a9a"></div>
<div class="a" style="left:0;top:153.70px;width:764px;height:1px;background:#9a9a9a"></div>
<div class="a" style="left:14.90px;top:57.05px;width:374.00px;height:25.65px;background:#ffff00;border:1px solid #303030"></div>
<div class="a" style="left:14.40px;top:2px;width:1px;height:170px;background:#707070"></div>
<div class="a" style="left:388.40px;top:2px;width:1px;height:170px;background:#707070"></div>
<div class="a nw" style="left:1.90px;top:3.33px;font-size:10px;line-height:10px;font-family:'Liberation Sans',sans-serif;color:#222;transform-origin:0 0;transform:scaleX(1.0868);-webkit-text-stroke:0.15px #222;">1</div>
<div class="a nw" style="left:18.00px;top:3.33px;font-size:10px;line-height:10px;font-family:'Liberation Sans',sans-serif;color:#222;transform-origin:0 0;transform:scaleX(1.1116);-webkit-text-stroke:0.15px #222;">11-15</div>
<div class="a nw" style="left:391.50px;top:3.33px;font-size:10px;line-height:10px;font-family:'Liberation Sans',sans-serif;color:#222;transform-origin:0 0;transform:scaleX(1.0793);-webkit-text-stroke:0.15px #222;">23-19</div>
<div class="a nw" style="left:1.90px;top:17.43px;font-size:10px;line-height:10px;font-family:'Liberation Sans',sans-serif;color:#222;transform-origin:0 0;transform:scaleX(1.0868);-webkit-text-stroke:0.15px #222;">2</div>
<div class="a nw" style="left:18.00px;top:17.43px;font-size:10px;line-height:10px;font-family:'Liberation Sans',sans-serif;color:#222;transform-origin:0 0;transform:scaleX(1.0772);-webkit-text-stroke:0.15px #222;">9-14</div>
<div class="a nw" style="left:391.50px;top:17.43px;font-size:10px;line-height:10px;font-family:'Liberation Sans',sans-serif;color:#222;transform-origin:0 0;transform:scaleX(1.0793);-webkit-text-stroke:0.15px #222;">27-23</div>
<div class="a nw" style="left:1.90px;top:31.68px;font-size:10px;line-height:10px;font-family:'Liberation Sans',sans-serif;color:#222;transform-origin:0 0;transform:scaleX(1.0868);-webkit-text-stroke:0.15px #222;">3</div>
<div class="a nw" style="left:18.00px;top:31.68px;font-size:10px;line-height:10px;font-family:'Liberation Sans',sans-serif;color:#222;transform-origin:0 0;transform:scaleX(1.1187);-webkit-text-stroke:0.15px #222;">8-11</div>
<div class="a nw" style="left:391.50px;top:31.68px;font-size:10px;line-height:10px;font-family:'Liberation Sans',sans-serif;color:#222;transform-origin:0 0;transform:scaleX(1.0793);-webkit-text-stroke:0.15px #222;">22-18</div>
<div class="a nw" style="left:1.90px;top:45.94px;font-size:10px;line-height:10px;font-family:'Liberation Sans',sans-serif;color:#222;transform-origin:0 0;transform:scaleX(1.0868);-webkit-text-stroke:0.15px #222;">4</div>
<div class="a nw" style="left:18.00px;top:45.94px;font-size:10px;line-height:10px;font-family:'Liberation Sans',sans-serif;color:#222;transform-origin:0 0;transform:scaleX(1.0937);-webkit-text-stroke:0.15px #222;">15x22</div>
<div class="a nw" style="left:391.50px;top:45.94px;font-size:10px;line-height:10px;font-family:'Liberation Sans',sans-serif;color:#222;transform-origin:0 0;transform:scaleX(1.0967);-webkit-text-stroke:0.15px #222;">25x18x9</div>
<div class="a nw" style="left:1.90px;top:60.19px;font-size:10px;line-height:10px;font-family:'Liberation Sans',sans-serif;color:#222;transform-origin:0 0;transform:scaleX(1.0868);-webkit-text-stroke:0.15px #222;">5</div>
<div class="a nw" style="left:18.00px;top:60.19px;font-size:10px;line-height:10px;font-family:'Liberation Sans',sans-serif;color:#222;transform-origin:0 0;transform:scaleX(1.0955);-webkit-text-stroke:0.15px #222;">5x14</div>
<div class="a nw" style="left:391.50px;top:60.19px;font-size:10px;line-height:10px;font-family:'Liberation Sans',sans-serif;color:#222;transform-origin:0 0;transform:scaleX(1.0793);-webkit-text-stroke:0.15px #222;">29-25</div>
<div class="a nw" style="left:1.90px;top:85.83px;font-size:10px;line-height:10px;font-family:'Liberation Sans',sans-serif;color:#222;transform-origin:0 0;transform:scaleX(1.0868);-webkit-text-stroke:0.15px #222;">6</div>
<div class="a nw" style="left:18.00px;top:85.83px;font-size:10px;line-height:10px;font-family:'Liberation Sans',sans-serif;color:#222;transform-origin:0 0;transform:scaleX(1.0735);-webkit-text-stroke:0.15px #222;">6-9</div>
<div class="a nw" style="left:391.50px;top:85.83px;font-size:10px;line-height:10px;font-family:'Liberation Sans',sans-serif;color:#222;transform-origin:0 0;transform:scaleX(1.0793);-webkit-text-stroke:0.15px #222;">25-22</div>
<div class="a nw" style="left:1.90px;top:100.13px;font-size:10px;line-height:10px;font-family:'Liberation Sans',sans-serif;color:#222;transform-origin:0 0;transform:scaleX(1.0868);-webkit-text-stroke:0.15px #222;">7</div>
<div class="a nw" style="left:18.00px;top:100.13px;font-size:10px;line-height:10px;font-family:'Liberation Sans',sans-serif;color:#222;transform-origin:0 0;transform:scaleX(1.0772);-webkit-text-stroke:0.15px #222;">9-13</div>
<div class="a nw" style="left:391.50px;top:100.13px;font-size:10px;line-height:10px;font-family:'Liberation Sans',sans-serif;color:#222;transform-origin:0 0;transform:scaleX(1.0793);-webkit-text-stroke:0.15px #222;">24-20</div>
<div class="a nw" style="left:1.90px;top:114.44px;font-size:10px;line-height:10px;font-family:'Liberation Sans',sans-serif;color:#222;transform-origin:0 0;transform:scaleX(1.0868);-webkit-text-stroke:0.15px #222;">8</div>
<div class="a nw" style="left:18.00px;top:114.44px;font-size:10px;line-height:10px;font-family:'Liberation Sans',sans-serif;color:#222;transform-origin:0 0;transform:scaleX(1.0735);-webkit-text-stroke:0.15px #222;">1-5</div>
<div class="a nw" style="left:391.50px;top:114.44px;font-size:10px;line-height:10px;font-family:'Liberation Sans',sans-serif;color:#222;transform-origin:0 0;transform:scaleX(1.0793);-webkit-text-stroke:0.15px #222;">22-18</div>
<div class="a nw" style="left:1.90px;top:128.73px;font-size:10px;line-height:10px;font-family:'Liberation Sans',sans-serif;color:#222;transform-origin:0 0;transform:scaleX(1.0868);-webkit-text-stroke:0.15px #222;">9</div>
<div class="a nw" style="left:18.00px;top:128.73px;font-size:10px;line-height:10px;font-family:'Liberation Sans',sans-serif;color:#222;transform-origin:0 0;transform:scaleX(1.0793);-webkit-text-stroke:0.15px #222;">14-17</div>
<div class="a nw" style="left:391.50px;top:128.73px;font-size:10px;line-height:10px;font-family:'Liberation Sans',sans-serif;color:#222;transform-origin:0 0;transform:scaleX(1.0937);-webkit-text-stroke:0.15px #222;">21x14</div>
<div class="a nw" style="left:1.90px;top:143.03px;font-size:10px;line-height:10px;font-family:'Liberation Sans',sans-serif;color:#222;transform-origin:0 0;transform:scaleX(1.0868);-webkit-text-stroke:0.15px #222;">10</div>
<div class="a nw" style="left:18.00px;top:143.03px;font-size:10px;line-height:10px;font-family:'Liberation Sans',sans-serif;color:#222;transform-origin:0 0;transform:scaleX(1.0937);-webkit-text-stroke:0.15px #222;">10x17</div>
<div class="a nw" style="left:391.50px;top:143.03px;font-size:10px;line-height:10px;font-family:'Liberation Sans',sans-serif;color:#222;transform-origin:0 0;transform:scaleX(1.0793);-webkit-text-stroke:0.15px #222;">18-14</div>
<div class="a nw" style="left:1.90px;top:157.33px;font-size:10px;line-height:10px;font-family:'Liberation Sans',sans-serif;color:#222;transform-origin:0 0;transform:scaleX(1.1645);-webkit-text-stroke:0.15px #222;">11</div>
<div class="a nw" style="left:18.00px;top:157.33px;font-size:10px;line-height:10px;font-family:'Liberation Sans',sans-serif;color:#222;transform-origin:0 0;transform:scaleX(1.0793);-webkit-text-stroke:0.15px #222;">17-22</div>
<div class="a nw" style="left:391.50px;top:157.33px;font-size:10px;line-height:10px;font-family:'Liberation Sans',sans-serif;color:#222;transform-origin:0 0;transform:scaleX(1.0937);-webkit-text-stroke:0.15px #222;">26x17</div>
<div class="a nw" style="left:18.00px;top:70.84px;font-size:10px;line-height:10px;font-family:'Liberation Sans',sans-serif;color:#222;transform-origin:0 0;transform:scaleX(1.0636);-webkit-text-stroke:0.15px #222;">See diagram.</div>
</div>
<div class="a" style="left:1389px;top:84px;width:7.5px;height:164px;background:#f0f0f0"></div>
<div class="a" style="left:1389.5px;top:102px;width:6.5px;height:30px;background:#c8c8c8"></div>
<div class="a" style="left:1387px;top:87px;width:1px;height:161px;background:#707070"></div>
<div class="a" style="left:623px;top:250.5px;width:720px;height:6px;background:linear-gradient(#e6e6f0,#b8b8c8 70%,#8c8c9c)"></div>
<div class="a nw" style="left:1346.00px;top:250.42px;font-size:8.6px;line-height:8.6px;font-family:'Liberation Sans',sans-serif;color:#e81c1c;font-weight:bold;transform-origin:0 0;transform:scaleX(1.2669);-webkit-text-stroke:0.25px #e81c1c;">53 / 27142</div>
<div class="a" style="left:623px;top:259px;width:774.5px;height:114px;border:1.5px solid #45454d;background:#fff"></div>
<div class="a" style="left:624.5px;top:260.5px;width:764.5px;height:17px;background:linear-gradient(#ffffff,#f3f3f3)"></div>
<div class="a" style="left:624.5px;top:260.5px;width:40px;height:17px;background:linear-gradient(#f4f9fd,#d6eaf8)"></div>
<svg class="a" style="left:627.7px;top:264.5px" width="10" height="10" viewBox="0 0 10 10"><circle cx="6" cy="4" r="3.4" fill="#8a8a8a"/><circle cx="5.4" cy="3.3" r="1.3" fill="#b8b8b8"/><path d="M3.8,6.2 L1,9" stroke="#7a7a7a" stroke-width="2" stroke-linecap="round"/></svg>
<div class="a nw" style="left:639.20px;top:264.74px;font-size:10px;line-height:10px;font-family:'Liberation Sans',sans-serif;color:#1a1a1a;transform-origin:0 0;transform:scaleX(1.0117);-webkit-text-stroke:0.15px #1a1a1a;">ID</div>
<svg class="a" style="left:669px;top:264.5px" width="10" height="10" viewBox="0 0 10 10"><circle cx="6" cy="4" r="3.4" fill="#8a8a8a"/><circle cx="5.4" cy="3.3" r="1.3" fill="#b8b8b8"/><path d="M3.8,6.2 L1,9" stroke="#7a7a7a" stroke-width="2" stroke-linecap="round"/></svg>
<div class="a nw" style="left:682.00px;top:264.74px;font-size:10px;line-height:10px;font-family:'Liberation Sans',sans-serif;color:#1a1a1a;transform-origin:0 0;transform:scaleX(1.2206);-webkit-text-stroke:0.15px #1a1a1a;">*</div>
<svg class="a" style="left:694px;top:264.5px" width="10" height="10" viewBox="0 0 10 10"><circle cx="6" cy="4" r="3.4" fill="#8a8a8a"/><circle cx="5.4" cy="3.3" r="1.3" fill="#b8b8b8"/><path d="M3.8,6.2 L1,9" stroke="#7a7a7a" stroke-width="2" stroke-linecap="round"/></svg>
<div class="a nw" style="left:705.00px;top:264.74px;font-size:10px;line-height:10px;font-family:'Liberation Sans',sans-serif;color:#1a1a1a;transform-origin:0 0;transform:scaleX(1.0511);-webkit-text-stroke:0.15px #1a1a1a;">Black</div>
<svg class="a" style="left:769px;top:264.5px" width="10" height="10" viewBox="0 0 10 10"><circle cx="6" cy="4" r="3.4" fill="#8a8a8a"/><circle cx="5.4" cy="3.3" r="1.3" fill="#b8b8b8"/><path d="M3.8,6.2 L1,9" stroke="#7a7a7a" stroke-width="2" stroke-linecap="round"/></svg>
<div class="a nw" style="left:781.00px;top:264.74px;font-size:10px;line-height:10px;font-family:'Liberation Sans',sans-serif;color:#1a1a1a;transform-origin:0 0;transform:scaleX(1.0807);-webkit-text-stroke:0.15px #1a1a1a;">White</div>
<svg class="a" style="left:847px;top:264.5px" width="10" height="10" viewBox="0 0 10 10"><circle cx="6" cy="4" r="3.4" fill="#8a8a8a"/><circle cx="5.4" cy="3.3" r="1.3" fill="#b8b8b8"/><path d="M3.8,6.2 L1,9" stroke="#7a7a7a" stroke-width="2" stroke-linecap="round"/></svg>
<div class="a nw" style="left:858.50px;top:264.74px;font-size:10px;line-height:10px;font-family:'Liberation Sans',sans-serif;color:#1a1a1a;transform-origin:0 0;transform:scaleX(1.0749);-webkit-text-stroke:0.15px #1a1a1a;">Date</div>
<svg class="a" style="left:892px;top:264.5px" width="10" height="10" viewBox="0 0 10 10"><circle cx="6" cy="4" r="3.4" fill="#8a8a8a"/><circle cx="5.4" cy="3.3" r="1.3" fill="#b8b8b8"/><path d="M3.8,6.2 L1,9" stroke="#7a7a7a" stroke-width="2" stroke-linecap="round"/></svg>
<div class="a nw" style="left:904.00px;top:264.74px;font-size:10px;line-height:10px;font-family:'Liberation Sans',sans-serif;color:#1a1a1a;transform-origin:0 0;transform:scaleX(1.0643);-webkit-text-stroke:0.15px #1a1a1a;">Event</div>
<svg class="a" style="left:1021px;top:264.5px" width="10" height="10" viewBox="0 0 10 10"><circle cx="6" cy="4" r="3.4" fill="#8a8a8a"/><circle cx="5.4" cy="3.3" r="1.3" fill="#b8b8b8"/><path d="M3.8,6.2 L1,9" stroke="#7a7a7a" stroke-width="2" stroke-linecap="round"/></svg>
<div class="a nw" style="left:1032.00px;top:264.74px;font-size:10px;line-height:10px;font-family:'Liberation Sans',sans-serif;color:#1a1a1a;transform-origin:0 0;transform:scaleX(1.0585);-webkit-text-stroke:0.15px #1a1a1a;">Site</div>
<svg class="a" style="left:1062px;top:264.5px" width="10" height="10" viewBox="0 0 10 10"><circle cx="6" cy="4" r="3.4" fill="#8a8a8a"/><circle cx="5.4" cy="3.3" r="1.3" fill="#b8b8b8"/><path d="M3.8,6.2 L1,9" stroke="#7a7a7a" stroke-width="2" stroke-linecap="round"/></svg>
<div class="a nw" style="left:1073.50px;top:264.74px;font-size:10px;line-height:10px;font-family:'Liberation Sans',sans-serif;color:#1a1a1a;transform-origin:0 0;transform:scaleX(1.0200);-webkit-text-stroke:0.15px #1a1a1a;">Round</div>
<svg class="a" style="left:1112.5px;top:264.5px" width="10" height="10" viewBox="0 0 10 10"><circle cx="6" cy="4" r="3.4" fill="#8a8a8a"/><circle cx="5.4" cy="3.3" r="1.3" fill="#b8b8b8"/><path d="M3.8,6.2 L1,9" stroke="#7a7a7a" stroke-width="2" stroke-linecap="round"/></svg>
<div class="a nw" style="left:1124.50px;top:264.74px;font-size:10px;line-height:10px;font-family:'Liberation Sans',sans-serif;color:#1a1a1a;transform-origin:0 0;transform:scaleX(1.0356);-webkit-text-stroke:0.15px #1a1a1a;">Result</div>
<svg class="a" style="left:1163px;top:264.5px" width="10" height="10" viewBox="0 0 10 10"><circle cx="6" cy="4" r="3.4" fill="#8a8a8a"/><circle cx="5.4" cy="3.3" r="1.3" fill="#b8b8b8"/><path d="M3.8,6.2 L1,9" stroke="#7a7a7a" stroke-width="2" stroke-linecap="round"/></svg>
<div class="a nw" style="left:1174.50px;top:264.74px;font-size:10px;line-height:10px;font-family:'Liberation Sans',sans-serif;color:#1a1a1a;transform-origin:0 0;transform:scaleX(1.0330);-webkit-text-stroke:0.15px #1a1a1a;">Moves</div>
<svg class="a" style="left:1213px;top:264.5px" width="10" height="10" viewBox="0 0 10 10"><circle cx="6" cy="4" r="3.4" fill="#8a8a8a"/><circle cx="5.4" cy="3.3" r="1.3" fill="#b8b8b8"/><path d="M3.8,6.2 L1,9" stroke="#7a7a7a" stroke-width="2" stroke-linecap="round"/></svg>
<div class="a nw" style="left:1224.50px;top:264.74px;font-size:10px;line-height:10px;font-family:'Liberation Sans',sans-serif;color:#1a1a1a;transform-origin:0 0;transform:scaleX(0.9287);-webkit-text-stroke:0.15px #1a1a1a;">FEN</div>
<div class="a" style="left:664.00px;top:261px;width:1px;height:16.5px;background:#e2e2e2"></div>
<div class="a" style="left:688.90px;top:261px;width:1px;height:16.5px;background:#e2e2e2"></div>
<div class="a" style="left:764.80px;top:261px;width:1px;height:16.5px;background:#e2e2e2"></div>
<div class="a" style="left:842.50px;top:261px;width:1px;height:16.5px;background:#e2e2e2"></div>
<div class="a" style="left:888.20px;top:261px;width:1px;height:16.5px;background:#e2e2e2"></div>
<div class="a" style="left:1016.30px;top:261px;width:1px;height:16.5px;background:#e2e2e2"></div>
<div class="a" style="left:1057.50px;top:261px;width:1px;height:16.5px;background:#e2e2e2"></div>
<div class="a" style="left:1108.00px;top:261px;width:1px;height:16.5px;background:#e2e2e2"></div>
<div class="a" style="left:1157.90px;top:261px;width:1px;height:16.5px;background:#e2e2e2"></div>
<div class="a" style="left:1209.00px;top:261px;width:1px;height:16.5px;background:#e2e2e2"></div>
<div class="a" style="left:1244.80px;top:261px;width:1px;height:16.5px;background:#e2e2e2"></div>
<div class="a" style="left:1247px;top:262px;width:16.5px;height:15px;background:#fff;border:1px solid #e0e0e0"></div>
<div class="a nw" style="left:1249.00px;top:264.54px;font-size:10px;line-height:10px;font-family:'Liberation Sans',sans-serif;color:#e03030;">{</div>
<div class="a nw" style="left:1257.50px;top:264.80px;font-size:8.5px;line-height:8.5px;font-family:'Liberation Sans',sans-serif;color:#222;">×</div>
<div class="a nw" style="left:1264.50px;top:264.14px;font-size:10px;line-height:10px;font-family:'Liberation Sans',sans-serif;color:#1a1a1a;transform-origin:0 0;transform:scaleX(1.0185);-webkit-text-stroke:0.15px #1a1a1a;">Score</div>
<div class="a" style="left:1372px;top:260px;width:12px;height:12px;background:#00e000;border:1px solid #1a3a1a;border-radius:1px"></div><div class="a nw" style="left:1375.00px;top:262.18px;font-size:9px;line-height:9px;font-family:'Liberation Sans',sans-serif;color:#0a1a0a;font-weight:bold;">?</div>
<div class="a" style="left:1385px;top:260px;width:12px;height:12px;background:#00e000;border:1px solid #1a3a1a;border-radius:1px"></div><div class="a nw" style="left:1387.50px;top:262.18px;font-size:9px;line-height:9px;font-family:'Liberation Sans',sans-serif;color:#0a1a0a;font-weight:bold;">X</div>
<div class="a" style="left:624.5px;top:277.50px;width:764.5px;height:14.5px;background:#f8e7d3"></div>
<div class="a" style="left:624.5px;top:291.20px;width:764.5px;height:0.8px;background:#8e8070"></div>
<div class="a" style="left:626.30px;top:277.50px;width:37.70px;height:14px;overflow:hidden"><div class="a nw" style="left:0.00px;top:2.43px;font-size:10px;line-height:10px;font-family:'Liberation Sans',sans-serif;color:#1e1a16;transform-origin:0 0;transform:scaleX(1.0868);-webkit-text-stroke:0.15px #1e1a16;">25963</div></div>
<div class="a" style="left:674.50px;top:277.50px;width:14.40px;height:14px;overflow:hidden"><div class="a nw" style="left:0.00px;top:2.43px;font-size:10px;line-height:10px;font-family:'Liberation Sans',sans-serif;color:#1e1a16;transform-origin:0 0;transform:scaleX(1.3630);-webkit-text-stroke:0.15px #1e1a16;">+</div></div>
<div class="a" style="left:691.20px;top:277.50px;width:73.60px;height:14px;overflow:hidden"><div class="a nw" style="left:0.00px;top:2.43px;font-size:10px;line-height:10px;font-family:'Liberation Sans',sans-serif;color:#1e1a16;transform-origin:0 0;transform:scaleX(0.9960);-webkit-text-stroke:0.15px #1e1a16;">Way, J.</div></div>
<div class="a" style="left:767.10px;top:277.50px;width:75.40px;height:14px;overflow:hidden"><div class="a nw" style="left:0.00px;top:2.43px;font-size:10px;line-height:10px;font-family:'Liberation Sans',sans-serif;color:#1e1a16;transform-origin:0 0;transform:scaleX(1.0586);-webkit-text-stroke:0.15px #1e1a16;">Coltherd, H.</div></div>
<div class="a" style="left:844.80px;top:277.50px;width:43.40px;height:14px;overflow:hidden"><div class="a nw" style="left:0.00px;top:2.43px;font-size:10px;line-height:10px;font-family:'Liberation Sans',sans-serif;color:#1e1a16;transform-origin:0 0;transform:scaleX(1.0868);-webkit-text-stroke:0.15px #1e1a16;">1858</div></div>
<div class="a" style="left:890.50px;top:277.50px;width:125.80px;height:14px;overflow:hidden"><div class="a nw" style="left:0.00px;top:2.43px;font-size:10px;line-height:10px;font-family:'Liberation Sans',sans-serif;color:#1e1a16;transform-origin:0 0;transform:scaleX(1.0737);-webkit-text-stroke:0.15px #1e1a16;">Newcastle 1858, game 4</div></div>
<div class="a" style="left:1018.60px;top:277.50px;width:38.90px;height:14px;overflow:hidden"><div class="a nw" style="left:0.00px;top:2.43px;font-size:10px;line-height:10px;font-family:'Liberation Sans',sans-serif;color:#1e1a16;transform-origin:0 0;transform:scaleX(1.0606);-webkit-text-stroke:0.15px #1e1a16;">Newcastle</div></div>
<div class="a" style="left:1059.80px;top:277.50px;width:48.20px;height:14px;overflow:hidden"><div class="a nw" style="left:0.00px;top:2.43px;font-size:10px;line-height:10px;font-family:'Liberation Sans',sans-serif;color:#1e1a16;transform-origin:0 0;transform:scaleX(1.0868);-webkit-text-stroke:0.15px #1e1a16;">4</div></div>
<div class="a" style="left:1110.30px;top:277.50px;width:47.60px;height:14px;overflow:hidden"><div class="a nw" style="left:0.00px;top:2.43px;font-size:10px;line-height:10px;font-family:'Liberation Sans',sans-serif;color:#1e1a16;transform-origin:0 0;transform:scaleX(1.0923);-webkit-text-stroke:0.15px #1e1a16;">1/2-1/2</div></div>
<div class="a" style="left:1160.20px;top:277.50px;width:48.80px;height:14px;overflow:hidden"><div class="a nw" style="left:0.00px;top:2.43px;font-size:10px;line-height:10px;font-family:'Liberation Sans',sans-serif;color:#1e1a16;transform-origin:0 0;transform:scaleX(1.0868);-webkit-text-stroke:0.15px #1e1a16;">39</div></div>
<div class="a" style="left:1247.10px;top:277.50px;width:141.40px;height:14px;overflow:hidden"><div class="a nw" style="left:0.00px;top:2.43px;font-size:10px;line-height:10px;font-family:'Liberation Sans',sans-serif;color:#1e1a16;transform-origin:0 0;transform:scaleX(1.0965);-webkit-text-stroke:0.15px #1e1a16;">1.11-15 23-19 2.8-11 22-17 3.8-11</div></div>
<div class="a" style="left:664.00px;top:277.50px;width:1px;height:15.30px;background:#8e8070"></div>
<div class="a" style="left:688.90px;top:277.50px;width:1px;height:15.30px;background:#8e8070"></div>
<div class="a" style="left:764.80px;top:277.50px;width:1px;height:15.30px;background:#8e8070"></div>
<div class="a" style="left:842.50px;top:277.50px;width:1px;height:15.30px;background:#8e8070"></div>
<div class="a" style="left:888.20px;top:277.50px;width:1px;height:15.30px;background:#8e8070"></div>
<div class="a" style="left:1016.30px;top:277.50px;width:1px;height:15.30px;background:#8e8070"></div>
<div class="a" style="left:1057.50px;top:277.50px;width:1px;height:15.30px;background:#8e8070"></div>
<div class="a" style="left:1108.00px;top:277.50px;width:1px;height:15.30px;background:#8e8070"></div>
<div class="a" style="left:1157.90px;top:277.50px;width:1px;height:15.30px;background:#8e8070"></div>
<div class="a" style="left:1209.00px;top:277.50px;width:1px;height:15.30px;background:#8e8070"></div>
<div class="a" style="left:1244.80px;top:277.50px;width:1px;height:15.30px;background:#8e8070"></div>
<div class="a" style="left:624.5px;top:292.00px;width:764.5px;height:14.5px;background:#f8e7d3"></div>
<div class="a" style="left:624.5px;top:305.70px;width:764.5px;height:0.8px;background:#8e8070"></div>
<div class="a" style="left:626.30px;top:292.00px;width:37.70px;height:14px;overflow:hidden"><div class="a nw" style="left:0.00px;top:2.43px;font-size:10px;line-height:10px;font-family:'Liberation Sans',sans-serif;color:#1e1a16;transform-origin:0 0;transform:scaleX(1.0868);-webkit-text-stroke:0.15px #1e1a16;">26296</div></div>
<div class="a" style="left:674.50px;top:292.00px;width:14.40px;height:14px;overflow:hidden"><div class="a nw" style="left:0.00px;top:2.43px;font-size:10px;line-height:10px;font-family:'Liberation Sans',sans-serif;color:#1e1a16;transform-origin:0 0;transform:scaleX(1.3630);-webkit-text-stroke:0.15px #1e1a16;">+</div></div>
<div class="a" style="left:691.20px;top:292.00px;width:73.60px;height:14px;overflow:hidden"><div class="a nw" style="left:0.00px;top:2.43px;font-size:10px;line-height:10px;font-family:'Liberation Sans',sans-serif;color:#1e1a16;transform-origin:0 0;transform:scaleX(1.0406);-webkit-text-stroke:0.15px #1e1a16;">Will, G.</div></div>
<div class="a" style="left:767.10px;top:292.00px;width:75.40px;height:14px;overflow:hidden"><div class="a nw" style="left:0.00px;top:2.43px;font-size:10px;line-height:10px;font-family:'Liberation Sans',sans-serif;color:#1e1a16;transform-origin:0 0;transform:scaleX(1.0997);-webkit-text-stroke:0.15px #1e1a16;">Battersby, A.</div></div>
<div class="a" style="left:844.80px;top:292.00px;width:43.40px;height:14px;overflow:hidden"><div class="a nw" style="left:0.00px;top:2.43px;font-size:10px;line-height:10px;font-family:'Liberation Sans',sans-serif;color:#1e1a16;transform-origin:0 0;transform:scaleX(1.0868);-webkit-text-stroke:0.15px #1e1a16;">1896</div></div>
<div class="a" style="left:890.50px;top:292.00px;width:125.80px;height:14px;overflow:hidden"><div class="a nw" style="left:0.00px;top:2.43px;font-size:10px;line-height:10px;font-family:'Liberation Sans',sans-serif;color:#1e1a16;transform-origin:0 0;transform:scaleX(1.0691);-webkit-text-stroke:0.15px #1e1a16;">Scottish Tourney 1896</div></div>
<div class="a" style="left:1018.60px;top:292.00px;width:38.90px;height:14px;overflow:hidden"><div class="a nw" style="left:0.00px;top:2.43px;font-size:10px;line-height:10px;font-family:'Liberation Sans',sans-serif;color:#1e1a16;transform-origin:0 0;transform:scaleX(0.9066);-webkit-text-stroke:0.15px #1e1a16;">?</div></div>
<div class="a" style="left:1059.80px;top:292.00px;width:48.20px;height:14px;overflow:hidden"><div class="a nw" style="left:0.00px;top:2.43px;font-size:10px;line-height:10px;font-family:'Liberation Sans',sans-serif;color:#1e1a16;transform-origin:0 0;transform:scaleX(0.9066);-webkit-text-stroke:0.15px #1e1a16;">?</div></div>
<div class="a" style="left:1110.30px;top:292.00px;width:47.60px;height:14px;overflow:hidden"><div class="a nw" style="left:0.00px;top:2.43px;font-size:10px;line-height:10px;font-family:'Liberation Sans',sans-serif;color:#1e1a16;transform-origin:0 0;transform:scaleX(1.0923);-webkit-text-stroke:0.15px #1e1a16;">1/2-1/2</div></div>
<div class="a" style="left:1160.20px;top:292.00px;width:48.80px;height:14px;overflow:hidden"><div class="a nw" style="left:0.00px;top:2.43px;font-size:10px;line-height:10px;font-family:'Liberation Sans',sans-serif;color:#1e1a16;transform-origin:0 0;transform:scaleX(1.0868);-webkit-text-stroke:0.15px #1e1a16;">37</div></div>
<div class="a" style="left:1247.10px;top:292.00px;width:141.40px;height:14px;overflow:hidden"><div class="a nw" style="left:0.00px;top:2.43px;font-size:10px;line-height:10px;font-family:'Liberation Sans',sans-serif;color:#1e1a16;transform-origin:0 0;transform:scaleX(1.0858);-webkit-text-stroke:0.15px #1e1a16;">1.11-15 23-19 2.9-13 22-18 3.6-9</div></div>
<div class="a" style="left:664.00px;top:292.00px;width:1px;height:15.30px;background:#8e8070"></div>
<div class="a" style="left:688.90px;top:292.00px;width:1px;height:15.30px;background:#8e8070"></div>
<div class="a" style="left:764.80px;top:292.00px;width:1px;height:15.30px;background:#8e8070"></div>
<div class="a" style="left:842.50px;top:292.00px;width:1px;height:15.30px;background:#8e8070"></div>
<div class="a" style="left:888.20px;top:292.00px;width:1px;height:15.30px;background:#8e8070"></div>
<div class="a" style="left:1016.30px;top:292.00px;width:1px;height:15.30px;background:#8e8070"></div>
<div class="a" style="left:1057.50px;top:292.00px;width:1px;height:15.30px;background:#8e8070"></div>
<div class="a" style="left:1108.00px;top:292.00px;width:1px;height:15.30px;background:#8e8070"></div>
<div class="a" style="left:1157.90px;top:292.00px;width:1px;height:15.30px;background:#8e8070"></div>
<div class="a" style="left:1209.00px;top:292.00px;width:1px;height:15.30px;background:#8e8070"></div>
<div class="a" style="left:1244.80px;top:292.00px;width:1px;height:15.30px;background:#8e8070"></div>
<div class="a" style="left:624.5px;top:306.50px;width:764.5px;height:14.5px;background:#f8e7d3"></div>
<div class="a" style="left:624.5px;top:320.20px;width:764.5px;height:0.8px;background:#8e8070"></div>
<div class="a" style="left:626.30px;top:306.50px;width:37.70px;height:14px;overflow:hidden"><div class="a nw" style="left:0.00px;top:2.43px;font-size:10px;line-height:10px;font-family:'Liberation Sans',sans-serif;color:#1e1a16;transform-origin:0 0;transform:scaleX(1.0868);-webkit-text-stroke:0.15px #1e1a16;">26417</div></div>
<div class="a" style="left:674.50px;top:306.50px;width:14.40px;height:14px;overflow:hidden"><div class="a nw" style="left:0.00px;top:2.43px;font-size:10px;line-height:10px;font-family:'Liberation Sans',sans-serif;color:#1e1a16;transform-origin:0 0;transform:scaleX(1.3630);-webkit-text-stroke:0.15px #1e1a16;">+</div></div>
<div class="a" style="left:691.20px;top:306.50px;width:73.60px;height:14px;overflow:hidden"><div class="a nw" style="left:0.00px;top:2.43px;font-size:10px;line-height:10px;font-family:'Liberation Sans',sans-serif;color:#1e1a16;transform-origin:0 0;transform:scaleX(1.0266);-webkit-text-stroke:0.15px #1e1a16;">Wold, K.</div></div>
<div class="a" style="left:767.10px;top:306.50px;width:75.40px;height:14px;overflow:hidden"><div class="a nw" style="left:0.00px;top:2.43px;font-size:10px;line-height:10px;font-family:'Liberation Sans',sans-serif;color:#1e1a16;transform-origin:0 0;transform:scaleX(1.0420);-webkit-text-stroke:0.15px #1e1a16;">Balderson, L.A.</div></div>
<div class="a" style="left:844.80px;top:306.50px;width:43.40px;height:14px;overflow:hidden"><div class="a nw" style="left:0.00px;top:2.43px;font-size:10px;line-height:10px;font-family:'Liberation Sans',sans-serif;color:#1e1a16;transform-origin:0 0;transform:scaleX(1.0868);-webkit-text-stroke:0.15px #1e1a16;">2000</div></div>
<div class="a" style="left:890.50px;top:306.50px;width:125.80px;height:14px;overflow:hidden"><div class="a nw" style="left:0.00px;top:2.43px;font-size:10px;line-height:10px;font-family:'Liberation Sans',sans-serif;color:#1e1a16;transform-origin:0 0;transform:scaleX(1.0654);-webkit-text-stroke:0.15px #1e1a16;">ID 2000</div></div>
<div class="a" style="left:1018.60px;top:306.50px;width:38.90px;height:14px;overflow:hidden"><div class="a nw" style="left:0.00px;top:2.43px;font-size:10px;line-height:10px;font-family:'Liberation Sans',sans-serif;color:#1e1a16;transform-origin:0 0;transform:scaleX(0.9066);-webkit-text-stroke:0.15px #1e1a16;">?</div></div>
<div class="a" style="left:1059.80px;top:306.50px;width:48.20px;height:14px;overflow:hidden"><div class="a nw" style="left:0.00px;top:2.43px;font-size:10px;line-height:10px;font-family:'Liberation Sans',sans-serif;color:#1e1a16;transform-origin:0 0;transform:scaleX(0.9066);-webkit-text-stroke:0.15px #1e1a16;">?</div></div>
<div class="a" style="left:1110.30px;top:306.50px;width:47.60px;height:14px;overflow:hidden"><div class="a nw" style="left:0.00px;top:2.43px;font-size:10px;line-height:10px;font-family:'Liberation Sans',sans-serif;color:#1e1a16;transform-origin:0 0;transform:scaleX(1.0923);-webkit-text-stroke:0.15px #1e1a16;">1/2-1/2</div></div>
<div class="a" style="left:1160.20px;top:306.50px;width:48.80px;height:14px;overflow:hidden"><div class="a nw" style="left:0.00px;top:2.43px;font-size:10px;line-height:10px;font-family:'Liberation Sans',sans-serif;color:#1e1a16;transform-origin:0 0;transform:scaleX(1.0868);-webkit-text-stroke:0.15px #1e1a16;">32</div></div>
<div class="a" style="left:1247.10px;top:306.50px;width:141.40px;height:14px;overflow:hidden"><div class="a nw" style="left:0.00px;top:2.43px;font-size:10px;line-height:10px;font-family:'Liberation Sans',sans-serif;color:#1e1a16;transform-origin:0 0;transform:scaleX(1.0899);-webkit-text-stroke:0.15px #1e1a16;">1.10-14 22-17 2.11-16 17x10 3</div></div>
<div class="a" style="left:664.00px;top:306.50px;width:1px;height:15.30px;background:#8e8070"></div>
<div class="a" style="left:688.90px;top:306.50px;width:1px;height:15.30px;background:#8e8070"></div>
<div class="a" style="left:764.80px;top:306.50px;width:1px;height:15.30px;background:#8e8070"></div>
<div class="a" style="left:842.50px;top:306.50px;width:1px;height:15.30px;background:#8e8070"></div>
<div class="a" style="left:888.20px;top:306.50px;width:1px;height:15.30px;background:#8e8070"></div>
<div class="a" style="left:1016.30px;top:306.50px;width:1px;height:15.30px;background:#8e8070"></div>
<div class="a" style="left:1057.50px;top:306.50px;width:1px;height:15.30px;background:#8e8070"></div>
<div class="a" style="left:1108.00px;top:306.50px;width:1px;height:15.30px;background:#8e8070"></div>
<div class="a" style="left:1157.90px;top:306.50px;width:1px;height:15.30px;background:#8e8070"></div>
<div class="a" style="left:1209.00px;top:306.50px;width:1px;height:15.30px;background:#8e8070"></div>
<div class="a" style="left:1244.80px;top:306.50px;width:1px;height:15.30px;background:#8e8070"></div>
<div class="a" style="left:624.5px;top:321.00px;width:764.5px;height:14.5px;background:#f8e7d3"></div>
<div class="a" style="left:624.5px;top:334.70px;width:764.5px;height:0.8px;background:#8e8070"></div>
<div class="a" style="left:626.30px;top:321.00px;width:37.70px;height:14px;overflow:hidden"><div class="a nw" style="left:0.00px;top:2.43px;font-size:10px;line-height:10px;font-family:'Liberation Sans',sans-serif;color:#1e1a16;transform-origin:0 0;transform:scaleX(1.0868);-webkit-text-stroke:0.15px #1e1a16;">26420</div></div>
<div class="a" style="left:674.50px;top:321.00px;width:14.40px;height:14px;overflow:hidden"><div class="a nw" style="left:0.00px;top:2.43px;font-size:10px;line-height:10px;font-family:'Liberation Sans',sans-serif;color:#1e1a16;transform-origin:0 0;transform:scaleX(1.3630);-webkit-text-stroke:0.15px #1e1a16;">+</div></div>
<div class="a" style="left:691.20px;top:321.00px;width:73.60px;height:14px;overflow:hidden"><div class="a nw" style="left:0.00px;top:2.43px;font-size:10px;line-height:10px;font-family:'Liberation Sans',sans-serif;color:#1e1a16;transform-origin:0 0;transform:scaleX(1.0266);-webkit-text-stroke:0.15px #1e1a16;">Wold, K.</div></div>
<div class="a" style="left:767.10px;top:321.00px;width:75.40px;height:14px;overflow:hidden"><div class="a nw" style="left:0.00px;top:2.43px;font-size:10px;line-height:10px;font-family:'Liberation Sans',sans-serif;color:#1e1a16;transform-origin:0 0;transform:scaleX(1.0420);-webkit-text-stroke:0.15px #1e1a16;">Balderson, L.A.</div></div>
<div class="a" style="left:844.80px;top:321.00px;width:43.40px;height:14px;overflow:hidden"><div class="a nw" style="left:0.00px;top:2.43px;font-size:10px;line-height:10px;font-family:'Liberation Sans',sans-serif;color:#1e1a16;transform-origin:0 0;transform:scaleX(1.0868);-webkit-text-stroke:0.15px #1e1a16;">2000</div></div>
<div class="a" style="left:890.50px;top:321.00px;width:125.80px;height:14px;overflow:hidden"><div class="a nw" style="left:0.00px;top:2.43px;font-size:10px;line-height:10px;font-family:'Liberation Sans',sans-serif;color:#1e1a16;transform-origin:0 0;transform:scaleX(1.0654);-webkit-text-stroke:0.15px #1e1a16;">ID 2000</div></div>
<div class="a" style="left:1018.60px;top:321.00px;width:38.90px;height:14px;overflow:hidden"><div class="a nw" style="left:0.00px;top:2.43px;font-size:10px;line-height:10px;font-family:'Liberation Sans',sans-serif;color:#1e1a16;transform-origin:0 0;transform:scaleX(0.9066);-webkit-text-stroke:0.15px #1e1a16;">?</div></div>
<div class="a" style="left:1059.80px;top:321.00px;width:48.20px;height:14px;overflow:hidden"><div class="a nw" style="left:0.00px;top:2.43px;font-size:10px;line-height:10px;font-family:'Liberation Sans',sans-serif;color:#1e1a16;transform-origin:0 0;transform:scaleX(0.9066);-webkit-text-stroke:0.15px #1e1a16;">?</div></div>
<div class="a" style="left:1110.30px;top:321.00px;width:47.60px;height:14px;overflow:hidden"><div class="a nw" style="left:0.00px;top:2.43px;font-size:10px;line-height:10px;font-family:'Liberation Sans',sans-serif;color:#1e1a16;transform-origin:0 0;transform:scaleX(1.0923);-webkit-text-stroke:0.15px #1e1a16;">1/2-1/2</div></div>
<div class="a" style="left:1160.20px;top:321.00px;width:48.80px;height:14px;overflow:hidden"><div class="a nw" style="left:0.00px;top:2.43px;font-size:10px;line-height:10px;font-family:'Liberation Sans',sans-serif;color:#1e1a16;transform-origin:0 0;transform:scaleX(1.0868);-webkit-text-stroke:0.15px #1e1a16;">35</div></div>
<div class="a" style="left:1247.10px;top:321.00px;width:141.40px;height:14px;overflow:hidden"><div class="a nw" style="left:0.00px;top:2.43px;font-size:10px;line-height:10px;font-family:'Liberation Sans',sans-serif;color:#1e1a16;transform-origin:0 0;transform:scaleX(1.0806);-webkit-text-stroke:0.15px #1e1a16;">1.10-15 21-17 2.7-10 17-14 3.9-13</div></div>
<div class="a" style="left:664.00px;top:321.00px;width:1px;height:15.30px;background:#8e8070"></div>
<div class="a" style="left:688.90px;top:321.00px;width:1px;height:15.30px;background:#8e8070"></div>
<div class="a" style="left:764.80px;top:321.00px;width:1px;height:15.30px;background:#8e8070"></div>
<div class="a" style="left:842.50px;top:321.00px;width:1px;height:15.30px;background:#8e8070"></div>
<div class="a" style="left:888.20px;top:321.00px;width:1px;height:15.30px;background:#8e8070"></div>
<div class="a" style="left:1016.30px;top:321.00px;width:1px;height:15.30px;background:#8e8070"></div>
<div class="a" style="left:1057.50px;top:321.00px;width:1px;height:15.30px;background:#8e8070"></div>
<div class="a" style="left:1108.00px;top:321.00px;width:1px;height:15.30px;background:#8e8070"></div>
<div class="a" style="left:1157.90px;top:321.00px;width:1px;height:15.30px;background:#8e8070"></div>
<div class="a" style="left:1209.00px;top:321.00px;width:1px;height:15.30px;background:#8e8070"></div>
<div class="a" style="left:1244.80px;top:321.00px;width:1px;height:15.30px;background:#8e8070"></div>
<div class="a" style="left:624.5px;top:335.50px;width:764.5px;height:14.5px;background:#f8e7d3"></div>
<div class="a" style="left:624.5px;top:349.20px;width:764.5px;height:0.8px;background:#8e8070"></div>
<div class="a" style="left:626.30px;top:335.50px;width:37.70px;height:14px;overflow:hidden"><div class="a nw" style="left:0.00px;top:2.43px;font-size:10px;line-height:10px;font-family:'Liberation Sans',sans-serif;color:#1e1a16;transform-origin:0 0;transform:scaleX(1.0868);-webkit-text-stroke:0.15px #1e1a16;">26750</div></div>
<div class="a" style="left:674.50px;top:335.50px;width:14.40px;height:14px;overflow:hidden"><div class="a nw" style="left:0.00px;top:2.43px;font-size:10px;line-height:10px;font-family:'Liberation Sans',sans-serif;color:#1e1a16;transform-origin:0 0;transform:scaleX(1.3630);-webkit-text-stroke:0.15px #1e1a16;">+</div></div>
<div class="a" style="left:691.20px;top:335.50px;width:73.60px;height:14px;overflow:hidden"><div class="a nw" style="left:0.00px;top:2.43px;font-size:10px;line-height:10px;font-family:'Liberation Sans',sans-serif;color:#1e1a16;transform-origin:0 0;transform:scaleX(1.0140);-webkit-text-stroke:0.15px #1e1a16;">Wyllie, J.</div></div>
<div class="a" style="left:767.10px;top:335.50px;width:75.40px;height:14px;overflow:hidden"><div class="a nw" style="left:0.00px;top:2.43px;font-size:10px;line-height:10px;font-family:'Liberation Sans',sans-serif;color:#1e1a16;transform-origin:0 0;transform:scaleX(0.9831);-webkit-text-stroke:0.15px #1e1a16;">Ferrie, J.</div></div>
<div class="a" style="left:844.80px;top:335.50px;width:43.40px;height:14px;overflow:hidden"><div class="a nw" style="left:0.00px;top:2.43px;font-size:10px;line-height:10px;font-family:'Liberation Sans',sans-serif;color:#1e1a16;transform-origin:0 0;transform:scaleX(1.0868);-webkit-text-stroke:0.15px #1e1a16;">1894</div></div>
<div class="a" style="left:890.50px;top:335.50px;width:125.80px;height:14px;overflow:hidden"><div class="a nw" style="left:0.00px;top:2.43px;font-size:10px;line-height:10px;font-family:'Liberation Sans',sans-serif;color:#1e1a16;transform-origin:0 0;transform:scaleX(1.0661);-webkit-text-stroke:0.15px #1e1a16;">Glasgow 1894, game 4</div></div>
<div class="a" style="left:1018.60px;top:335.50px;width:38.90px;height:14px;overflow:hidden"><div class="a nw" style="left:0.00px;top:2.43px;font-size:10px;line-height:10px;font-family:'Liberation Sans',sans-serif;color:#1e1a16;transform-origin:0 0;transform:scaleX(1.0380);-webkit-text-stroke:0.15px #1e1a16;">Glasgow</div></div>
<div class="a" style="left:1059.80px;top:335.50px;width:48.20px;height:14px;overflow:hidden"><div class="a nw" style="left:0.00px;top:2.43px;font-size:10px;line-height:10px;font-family:'Liberation Sans',sans-serif;color:#1e1a16;transform-origin:0 0;transform:scaleX(1.0868);-webkit-text-stroke:0.15px #1e1a16;">4</div></div>
<div class="a" style="left:1110.30px;top:335.50px;width:47.60px;height:14px;overflow:hidden"><div class="a nw" style="left:0.00px;top:2.43px;font-size:10px;line-height:10px;font-family:'Liberation Sans',sans-serif;color:#1e1a16;transform-origin:0 0;transform:scaleX(1.0735);-webkit-text-stroke:0.15px #1e1a16;">0-1</div></div>
<div class="a" style="left:1160.20px;top:335.50px;width:48.80px;height:14px;overflow:hidden"><div class="a nw" style="left:0.00px;top:2.43px;font-size:10px;line-height:10px;font-family:'Liberation Sans',sans-serif;color:#1e1a16;transform-origin:0 0;transform:scaleX(1.0868);-webkit-text-stroke:0.15px #1e1a16;">32</div></div>
<div class="a" style="left:1247.10px;top:335.50px;width:141.40px;height:14px;overflow:hidden"><div class="a nw" style="left:0.00px;top:2.43px;font-size:10px;line-height:10px;font-family:'Liberation Sans',sans-serif;color:#1e1a16;transform-origin:0 0;transform:scaleX(1.0899);-webkit-text-stroke:0.15px #1e1a16;">1.11-15 22-17 2.15-19 24x15 3</div></div>
<div class="a" style="left:664.00px;top:335.50px;width:1px;height:15.30px;background:#8e8070"></div>
<div class="a" style="left:688.90px;top:335.50px;width:1px;height:15.30px;background:#8e8070"></div>
<div class="a" style="left:764.80px;top:335.50px;width:1px;height:15.30px;background:#8e8070"></div>
<div class="a" style="left:842.50px;top:335.50px;width:1px;height:15.30px;background:#8e8070"></div>
<div class="a" style="left:888.20px;top:335.50px;width:1px;height:15.30px;background:#8e8070"></div>
<div class="a" style="left:1016.30px;top:335.50px;width:1px;height:15.30px;background:#8e8070"></div>
<div class="a" style="left:1057.50px;top:335.50px;width:1px;height:15.30px;background:#8e8070"></div>
<div class="a" style="left:1108.00px;top:335.50px;width:1px;height:15.30px;background:#8e8070"></div>
<div class="a" style="left:1157.90px;top:335.50px;width:1px;height:15.30px;background:#8e8070"></div>
<div class="a" style="left:1209.00px;top:335.50px;width:1px;height:15.30px;background:#8e8070"></div>
<div class="a" style="left:1244.80px;top:335.50px;width:1px;height:15.30px;background:#8e8070"></div>
<div class="a" style="left:624.5px;top:350.20px;width:764.5px;height:13.7px;background:#0b6ed3"></div>
<div class="a" style="left:626.30px;top:350.20px;width:37.70px;height:14px;overflow:hidden"><div class="a nw" style="left:0.00px;top:2.43px;font-size:10px;line-height:10px;font-family:'Liberation Sans',sans-serif;color:#fff;transform-origin:0 0;transform:scaleX(1.0868);-webkit-text-stroke:0.15px #fff;">26956</div></div>
<div class="a" style="left:674.50px;top:350.20px;width:14.40px;height:14px;overflow:hidden"><div class="a nw" style="left:0.00px;top:2.43px;font-size:10px;line-height:10px;font-family:'Liberation Sans',sans-serif;color:#fff;transform-origin:0 0;transform:scaleX(1.3630);-webkit-text-stroke:0.15px #fff;">+</div></div>
<div class="a" style="left:691.20px;top:350.20px;width:73.60px;height:14px;overflow:hidden"><div class="a nw" style="left:0.00px;top:2.43px;font-size:10px;line-height:10px;font-family:'Liberation Sans',sans-serif;color:#fff;transform-origin:0 0;transform:scaleX(1.0021);-webkit-text-stroke:0.15px #fff;">Yates, R.D.</div></div>
<div class="a" style="left:767.10px;top:350.20px;width:75.40px;height:14px;overflow:hidden"><div class="a nw" style="left:0.00px;top:2.43px;font-size:10px;line-height:10px;font-family:'Liberation Sans',sans-serif;color:#fff;transform-origin:0 0;transform:scaleX(1.0140);-webkit-text-stroke:0.15px #fff;">Wyllie, J.</div></div>
<div class="a" style="left:844.80px;top:350.20px;width:43.40px;height:14px;overflow:hidden"><div class="a nw" style="left:0.00px;top:2.43px;font-size:10px;line-height:10px;font-family:'Liberation Sans',sans-serif;color:#fff;transform-origin:0 0;transform:scaleX(1.0868);-webkit-text-stroke:0.15px #fff;">1876</div></div>
<div class="a" style="left:890.50px;top:350.20px;width:125.80px;height:14px;overflow:hidden"><div class="a nw" style="left:0.00px;top:2.43px;font-size:10px;line-height:10px;font-family:'Liberation Sans',sans-serif;color:#fff;transform-origin:0 0;transform:scaleX(1.0631);-webkit-text-stroke:0.15px #fff;">New York 1876, game 47</div></div>
<div class="a" style="left:1018.60px;top:350.20px;width:38.90px;height:14px;overflow:hidden"><div class="a nw" style="left:0.00px;top:2.43px;font-size:10px;line-height:10px;font-family:'Liberation Sans',sans-serif;color:#fff;transform-origin:0 0;transform:scaleX(1.0297);-webkit-text-stroke:0.15px #fff;">New York</div></div>
<div class="a" style="left:1059.80px;top:350.20px;width:48.20px;height:14px;overflow:hidden"><div class="a nw" style="left:0.00px;top:2.43px;font-size:10px;line-height:10px;font-family:'Liberation Sans',sans-serif;color:#fff;transform-origin:0 0;transform:scaleX(1.0868);-webkit-text-stroke:0.15px #fff;">47</div></div>
<div class="a" style="left:1110.30px;top:350.20px;width:47.60px;height:14px;overflow:hidden"><div class="a nw" style="left:0.00px;top:2.43px;font-size:10px;line-height:10px;font-family:'Liberation Sans',sans-serif;color:#fff;transform-origin:0 0;transform:scaleX(1.0735);-webkit-text-stroke:0.15px #fff;">1-0</div></div>
<div class="a" style="left:1160.20px;top:350.20px;width:48.80px;height:14px;overflow:hidden"><div class="a nw" style="left:0.00px;top:2.43px;font-size:10px;line-height:10px;font-family:'Liberation Sans',sans-serif;color:#fff;transform-origin:0 0;transform:scaleX(1.0868);-webkit-text-stroke:0.15px #fff;">43</div></div>
<div class="a" style="left:1247.10px;top:350.20px;width:141.40px;height:14px;overflow:hidden"><div class="a nw" style="left:0.00px;top:2.43px;font-size:10px;line-height:10px;font-family:'Liberation Sans',sans-serif;color:#fff;transform-origin:0 0;transform:scaleX(1.0778);-webkit-text-stroke:0.15px #fff;">{Robert Yates was an American player</div></div>
<div class="a" style="left:664.00px;top:350.20px;width:1px;height:14.50px;background:#0a4f99"></div>
<div class="a" style="left:688.90px;top:350.20px;width:1px;height:14.50px;background:#0a4f99"></div>
<div class="a" style="left:764.80px;top:350.20px;width:1px;height:14.50px;background:#0a4f99"></div>
<div class="a" style="left:842.50px;top:350.20px;width:1px;height:14.50px;background:#0a4f99"></div>
<div class="a" style="left:888.20px;top:350.20px;width:1px;height:14.50px;background:#0a4f99"></div>
<div class="a" style="left:1016.30px;top:350.20px;width:1px;height:14.50px;background:#0a4f99"></div>
<div class="a" style="left:1057.50px;top:350.20px;width:1px;height:14.50px;background:#0a4f99"></div>
<div class="a" style="left:1108.00px;top:350.20px;width:1px;height:14.50px;background:#0a4f99"></div>
<div class="a" style="left:1157.90px;top:350.20px;width:1px;height:14.50px;background:#0a4f99"></div>
<div class="a" style="left:1209.00px;top:350.20px;width:1px;height:14.50px;background:#0a4f99"></div>
<div class="a" style="left:1244.80px;top:350.20px;width:1px;height:14.50px;background:#0a4f99"></div>
<div class="a" style="left:624.5px;top:364px;width:764.5px;height:7.5px;background:#f0f0f0"></div>
<div class="a" style="left:631px;top:364.5px;width:71px;height:6.5px;background:#cfcfcf"></div>
<div class="a" style="left:1389px;top:277.5px;width:7px;height:94px;background:#f0f0f0"></div>
<div class="a" style="left:1389.5px;top:348.5px;width:6px;height:7px;background:#c8c8c8"></div>
<div class="a" style="left:623px;top:375.8px;width:774px;height:3.5px;background:linear-gradient(#dcdcea,#a4a4b8)"></div>
<div class="a" style="left:623px;top:382.5px;width:11.5px;height:12px;background:#d8d8d8;border:1px solid #404040;border-right-color:#909090;border-bottom-color:#909090"></div>
<div class="a nw" style="left:626.50px;top:384.38px;font-size:9px;line-height:9px;font-family:'Liberation Sans',sans-serif;color:#111;font-weight:bold;">-</div>
<div class="a" style="left:636.5px;top:383px;width:181.5px;height:11.5px;background:#fdf6e0;border:1px solid #9a9a9a;border-top:1.5px solid #3a3a3a;border-left:1.5px solid #3a3a3a"></div><div class="a nw" style="left:639.10px;top:384.34px;font-size:9.6px;line-height:9.6px;font-family:'Liberation Mono',monospace;color:#262626;font-weight:bold;">Book Move</div>
<div class="a" style="left:819.6px;top:383px;width:182.60000000000002px;height:11.5px;background:#fdf6e0;border:1px solid #9a9a9a;border-top:1.5px solid #3a3a3a;border-left:1.5px solid #3a3a3a"></div><div class="a nw" style="left:822.20px;top:384.34px;font-size:9.6px;line-height:9.6px;font-family:'Liberation Mono',monospace;color:#262626;font-weight:bold;">Depth: 1/1</div>
<div class="a" style="left:1004.4px;top:383px;width:181.10000000000002px;height:11.5px;background:#fdf6e0;border:1px solid #9a9a9a;border-top:1.5px solid #3a3a3a;border-left:1.5px solid #3a3a3a"></div><div class="a nw" style="left:1007.00px;top:384.34px;font-size:9.6px;line-height:9.6px;font-family:'Liberation Mono',monospace;color:#262626;font-weight:bold;">0 N</div>
<div class="a" style="left:1187.6px;top:383px;width:182.70000000000005px;height:11.5px;background:#fdf6e0;border:1px solid #9a9a9a;border-top:1.5px solid #3a3a3a;border-left:1.5px solid #3a3a3a"></div><div class="a nw" style="left:1190.20px;top:384.34px;font-size:9.6px;line-height:9.6px;font-family:'Liberation Mono',monospace;color:#262626;font-weight:bold;">-- N/s</div>
<div class="a" style="left:1372px;top:383px;width:12px;height:12px;background:#00e000;border:1px solid #1a3a1a;border-radius:1px"></div><div class="a nw" style="left:1375.00px;top:385.18px;font-size:9px;line-height:9px;font-family:'Liberation Sans',sans-serif;color:#0a1a0a;font-weight:bold;">?</div>
<div class="a" style="left:1385px;top:383px;width:12px;height:12px;background:#00e000;border:1px solid #1a3a1a;border-radius:1px"></div>
<svg class="a" style="left:1385px;top:383px" width="12" height="12" viewBox="0 0 12 12"><path d="M2.5,5 L5.5,10 L9.5,1.5" fill="none" stroke="#0a1a0a" stroke-width="1.6"/></svg>
<div class="a" style="left:623px;top:396.5px;width:774.5px;height:151.5px;border:1.5px solid #404040;border-right-width:1.5px;background:#f8f8f8"></div>
<div class="a nw" style="left:626.60px;top:401.79px;font-size:9.8px;line-height:9.8px;font-family:'Liberation Mono',monospace;color:#1a1a1a;font-weight:bold;">* : 29-25      {book...0/d21}</div>
<div class="a nw" style="left:626.60px;top:412.93px;font-size:9.8px;line-height:9.8px;font-family:'Liberation Mono',monospace;color:#1a1a1a;font-weight:bold;">* : 26-22      {book...2/d7}</div>
<div class="a nw" style="left:626.60px;top:424.07px;font-size:9.8px;line-height:9.8px;font-family:'Liberation Mono',monospace;color:#1a1a1a;font-weight:bold;">* : 24-20      {book...3/d5}</div>
<div class="a nw" style="left:626.60px;top:435.21px;font-size:9.8px;line-height:9.8px;font-family:'Liberation Mono',monospace;color:#1a1a1a;font-weight:bold;">* : 30-25      {book...9/d5}</div>
<div class="a nw" style="left:626.60px;top:446.35px;font-size:9.8px;line-height:9.8px;font-family:'Liberation Mono',monospace;color:#1a1a1a;font-weight:bold;">* : 32-27      {book...10/d3}</div>
<div class="a nw" style="left:626.60px;top:457.49px;font-size:9.8px;line-height:9.8px;font-family:'Liberation Mono',monospace;color:#1a1a1a;font-weight:bold;">* : 31-27      {book...11/d5}</div>
<div class="a nw" style="left:626.60px;top:479.09px;font-size:9.8px;line-height:9.8px;font-family:'Liberation Mono',monospace;color:#1a1a1a;font-weight:bold;">nodes:0  db:0  time:0s</div>
<div class="a" style="left:622.5px;top:552px;width:761.5px;height:11.5px;background:#f8f8f8;border:1.5px solid #404040"></div>
<div class="a" style="left:1385.5px;top:552.5px;width:10.8px;height:10.8px;border-radius:50%;background:#5a8cee"></div>
</body></html>
